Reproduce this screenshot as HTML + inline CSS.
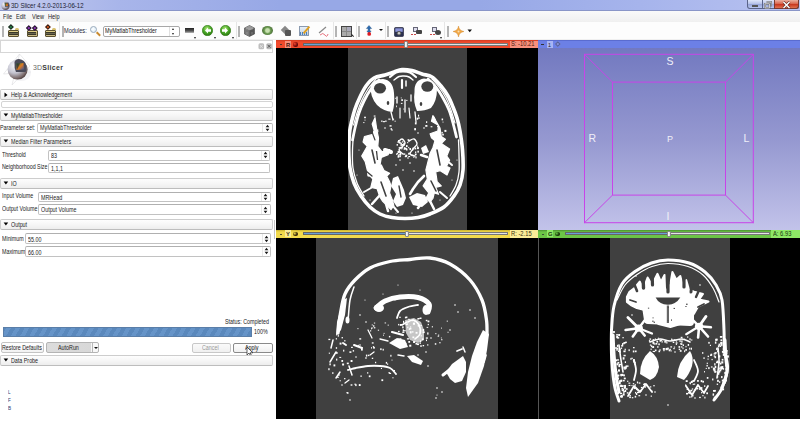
<!DOCTYPE html>
<html><head><meta charset="utf-8">
<style>
*{margin:0;padding:0;box-sizing:border-box}
html,body{width:800px;height:430px;overflow:hidden;background:#fff;font-family:"Liberation Sans",sans-serif;color:#1a1a1a}
.a{position:absolute}
.t{position:absolute;font-size:6.5px;line-height:8px;white-space:nowrap;transform-origin:0 50%;transform:scaleX(.86)}
.box{position:absolute;border:1px solid #cdcdcd;border-bottom-color:#bdbdbd;border-radius:2px;background:linear-gradient(#fdfdfd,#f6f6f6 50%,#ededed)}
.fld{position:absolute;border:1px solid #c2c2c2;border-top-color:#b0b0b0;border-radius:2px;background:#fff}
.spin{position:absolute;right:0;top:0;bottom:0;width:8px;border-left:1px solid #e8e8e8}
.tri-d{position:absolute;width:0;height:0;border-left:2.5px solid transparent;border-right:2.5px solid transparent;border-top:3px solid #111}
.tri-r{position:absolute;width:0;height:0;border-top:2.5px solid transparent;border-bottom:2.5px solid transparent;border-left:3px solid #111}
.grip{position:absolute;width:2px;height:11px;background:#b4b4b4;top:26px}
.sep{position:absolute;width:1px;height:17px;background:#e6e6e6;top:22px}
.dd{position:absolute;width:0;height:0;border-left:1.5px solid transparent;border-right:1.5px solid transparent;border-top:2px solid #222}
</style></head><body>
<!-- title bar -->
<div class="a" style="left:0;top:0;width:800px;height:10px;background:linear-gradient(90deg,#c4cbee 0%,#a8b5ea 15%,#97a8e6 35%,#97a8e6 60%,#a6b4ec 80%,#b8c2f0 100%)"></div>
<div class="a" style="left:0;top:10px;width:800px;height:1px;background:#8a96c8"></div>
<svg class="a" style="left:0.5px;top:0.5px" width="9" height="9"><defs><radialGradient id="tsph" cx="35%" cy="30%" r="75%"><stop offset="0" stop-color="#f8f8fc"/><stop offset=".55" stop-color="#b8b8c8"/><stop offset="1" stop-color="#4a3a3a"/></radialGradient></defs><circle cx="4.5" cy="4.7" r="4.2" fill="url(#tsph)"/><path d="M3.5,1.5 L7.5,1.8 L8,5.5 L4,5.8Z" fill="#3a3a48"/><path d="M4.3,2.4 L6.8,2.5 L7,5 L4.5,5.1Z" fill="#d07020"/><path d="M4.3,2.4 L5.5,2.4 L4.5,5.1Z" fill="#208040"/></svg>
<div class="t" style="left:10.5px;top:1.8px;font-size:7.2px;color:#202030;transform:scaleX(.84)">3D Slicer 4.2.0-2013-06-12</div>
<div class="a" style="left:747px;top:0;width:52px;height:9px;border:1px solid #5a6488;border-top:0;border-radius:0 0 3px 3px;background:linear-gradient(#dfe6fa,#b4c0e8 50%,#98a6d8 55%,#b8c6f0)"></div>
<div class="a" style="left:774px;top:0;width:25px;height:9px;border:1px solid #7a3a30;border-top:0;border-radius:0 0 3px 0;background:linear-gradient(#eab0a0,#d86048 50%,#c83820 55%,#e07050)"></div>
<div class="a" style="left:761.5px;top:0;width:1px;height:8.5px;background:#5a6488"></div>
<div class="a" style="left:751.5px;top:4.5px;width:6px;height:2.2px;background:#fff;border:0.6px solid #555"></div>
<svg class="a" style="left:764px;top:0.5px" width="8" height="8"><path d="M2.5,1 L7,1 L7,5.5" fill="none" stroke="#555" stroke-width="1.6"/><path d="M2.5,1 L7,1 L7,5.5" fill="none" stroke="#fff" stroke-width=".6"/><rect x="1" y="2.8" width="4.5" height="4.2" fill="none" stroke="#555" stroke-width="1.6"/><rect x="1" y="2.8" width="4.5" height="4.2" fill="none" stroke="#fff" stroke-width=".7"/></svg>
<svg class="a" style="left:782px;top:0.5px" width="9" height="8"><path d="M1.5,1 L7.5,7 M7.5,1 L1.5,7" stroke="#5a2a20" stroke-width="2.6"/><path d="M1.5,1 L7.5,7 M7.5,1 L1.5,7" stroke="#fff" stroke-width="1.5"/></svg>
<!-- menu bar -->
<div class="a" style="left:0;top:11px;width:800px;height:10.5px;background:linear-gradient(#fafafa,#f0f0f0)"></div>
<div class="a" style="left:0;top:21.5px;width:800px;height:0.5px;background:#e0e0e0"></div>
<div class="t" style="left:3px;top:13px">File</div>
<div class="t" style="left:16px;top:13px">Edit</div>
<div class="t" style="left:32px;top:13px">View</div>
<div class="t" style="left:48px;top:13px">Help</div>
<!-- toolbar -->
<div class="a" style="left:0;top:22px;width:800px;height:18px;background:#fdfdfd"></div>
<div class="a" style="left:0;top:39px;width:800px;height:1px;background:#f0f0f0"></div>
<div class="grip" style="left:2px"></div>
<div class="sep" style="left:59px"></div>
<div class="grip" style="left:62px"></div>
<div class="t" style="left:64px;top:27px;color:#223">Modules:</div>
<div class="sep" style="left:235.5px"></div>
<div class="grip" style="left:238px"></div>
<div class="sep" style="left:333px"></div>
<div class="grip" style="left:335px"></div>
<div class="sep" style="left:355.5px"></div>
<div class="grip" style="left:357.5px"></div>
<div class="sep" style="left:384.5px"></div>
<div class="grip" style="left:386.5px"></div>
<div class="sep" style="left:444px"></div>
<div class="grip" style="left:447px"></div>
<div class="a" style="left:8px;top:29.8px;width:11px;height:7px;border:0.8px solid #5a5030;border-radius:1px;background:linear-gradient(#e8d890,#c8b470 30%,#b0a070 70%,#d8c890)"></div><div class="a" style="left:14.5px;top:28.3px;width:4px;height:2px;border-radius:1.5px 1.5px 0 0;background:#d8c070"></div><div class="a" style="left:9.2px;top:31.6px;width:8.6px;height:3px;background:#6a6650;border-top:0.6px solid #3a3828;border-bottom:0.6px solid #3a3828"></div><div class="a" style="left:9.2px;top:25.4px;width:3.8px;height:3.8px;background:#208040;border:0.5px solid #222;transform:rotate(45deg)"></div>
<div class="a" style="left:26.5px;top:29.8px;width:11px;height:7px;border:0.8px solid #5a5030;border-radius:1px;background:linear-gradient(#e8d890,#c8b470 30%,#b0a070 70%,#d8c890)"></div><div class="a" style="left:33.0px;top:28.3px;width:4px;height:2px;border-radius:1.5px 1.5px 0 0;background:#d8c070"></div><div class="a" style="left:27.7px;top:31.6px;width:8.6px;height:3px;background:#6a6650;border-top:0.6px solid #3a3828;border-bottom:0.6px solid #3a3828"></div><div class="a" style="left:27.3px;top:25.6px;width:3.6px;height:3.6px;background:#9030c0;border:0.5px solid #222;transform:rotate(45deg)"></div><div class="a" style="left:32.7px;top:25.6px;width:3.6px;height:3.6px;background:#9030c0;border:0.5px solid #222;transform:rotate(45deg)"></div>
<div class="a" style="left:45px;top:29.8px;width:11px;height:7px;border:0.8px solid #5a5030;border-radius:1px;background:linear-gradient(#e8d890,#c8b470 30%,#b0a070 70%,#d8c890)"></div><div class="a" style="left:51.5px;top:28.3px;width:4px;height:2px;border-radius:1.5px 1.5px 0 0;background:#d8c070"></div><div class="a" style="left:46.2px;top:31.6px;width:8.6px;height:3px;background:#6a6650;border-top:0.6px solid #3a3828;border-bottom:0.6px solid #3a3828"></div><div class="a" style="left:46.2px;top:25.4px;width:3.8px;height:3.8px;background:#e05010;border:0.5px solid #222;transform:rotate(45deg)"></div>
<div class="a" style="left:90px;top:25.5px;width:7px;height:7px;border-radius:50%;border:1.2px solid #9ab;background:radial-gradient(circle at 40% 40%,#fff,#cfe4f4)"></div><div class="a" style="left:95.5px;top:33px;width:5px;height:1.8px;background:#c88a30;transform:rotate(45deg)"></div>
<div class="fld" style="left:103px;top:25.5px;width:77px;height:11px;border-color:#a8a8a8"></div><div class="t" style="left:105px;top:27px;font-size:6.3px;color:#111;transform:scaleX(0.85);">MyMatlabThresholder</div>
<div class="a" style="left:169px;top:26.5px;width:1px;height:9px;background:#e0e0e0"></div><div class="a" style="left:171.5px;top:28px;border:1.5px solid transparent;border-bottom:2px solid #222;border-top:0;width:0;height:0"></div><div class="a" style="left:171.5px;top:32.5px;border:1.5px solid transparent;border-top:2px solid #222;border-bottom:0;width:0;height:0"></div>
<div class="a" style="left:185px;top:27.5px;width:9px;height:5.5px;background:linear-gradient(#222,#555 60%,#bbb)"></div><div class="dd" style="left:194px;top:36.5px"></div>
<svg class="a" style="left:201.8px;top:24.8px" width="11" height="11"><defs><radialGradient id="gg207" cx="45%" cy="35%" r="65%"><stop offset="0" stop-color="#b8ec80"/><stop offset=".55" stop-color="#4aa828"/><stop offset="1" stop-color="#2a7a10"/></radialGradient></defs><circle cx="5.5" cy="5.5" r="5.2" fill="url(#gg207)" stroke="#357a1a" stroke-width=".6"/><path d="M3,5.5 L6,2.5 L6,4.3 L9,4.3 L9,6.7 L6,6.7 L6,8.5Z" fill="#fff"/></svg><div class="dd" style="left:213.5px;top:36.5px"></div>
<svg class="a" style="left:220.2px;top:24.8px" width="11" height="11"><defs><radialGradient id="gg225" cx="45%" cy="35%" r="65%"><stop offset="0" stop-color="#b8ec80"/><stop offset=".55" stop-color="#4aa828"/><stop offset="1" stop-color="#2a7a10"/></radialGradient></defs><circle cx="5.5" cy="5.5" r="5.2" fill="url(#gg225)" stroke="#357a1a" stroke-width=".6"/><path d="M8,5.5 L5,2.5 L5,4.3 L2,4.3 L2,6.7 L5,6.7 L5,8.5Z" fill="#fff"/></svg><div class="dd" style="left:232px;top:36.5px"></div>
<svg class="a" style="left:243.5px;top:24.5px" width="11" height="12"><path d="M5.5,0.5 L10.5,3 L10.5,9 L5.5,11.5 L0.5,9 L0.5,3Z" fill="#555" stroke="#333" stroke-width=".5"/><path d="M0.5,3 L5.5,5.5 L10.5,3 L5.5,0.5Z" fill="#999"/><path d="M5.5,5.5 L5.5,11.5 L0.5,9 L0.5,3Z" fill="#777"/><path d="M2,4 L9,4 M3,7 L3,9.5 M8,7 L8,9.5" stroke="#bbb" stroke-width=".4"/></svg>
<div class="a" style="left:261.5px;top:26px;width:11px;height:9px;border-radius:50%;background:radial-gradient(circle,#c8e0b0 0 25%,#6a9a50 45%,#405a30 90%)"></div>
<div class="a" style="left:282px;top:27px;width:6px;height:6px;background:#888;transform:rotate(45deg)"></div><div class="a" style="left:285px;top:29.5px;width:6px;height:6px;background:#555;border-radius:1px"></div>
<div class="a" style="left:299px;top:26px;width:10px;height:10px;border:1px solid #8a9ab0;background:linear-gradient(#e8f0f8,#c0d0e0)"></div><div class="a" style="left:300px;top:32px;width:8px;height:3px;background:repeating-linear-gradient(90deg,#4a80c0 0 1px,transparent 1px 2px)"></div><div class="a" style="left:302px;top:29px;width:9px;height:2px;background:#e0a020;transform:rotate(-50deg)"></div>
<svg class="a" style="left:317px;top:25px" width="12" height="12"><path d="M2 8 L9 2" stroke="#888" stroke-width="1.2"/><path d="M3 10 Q6 7 8 10 T11 9" stroke="#e05060" stroke-width=".8" fill="none"/></svg>
<div class="a" style="left:341px;top:26px;width:11px;height:10.5px;border:1px solid #444;background:#888"></div><div class="a" style="left:342px;top:27px;width:4px;height:4px;background:#aaa"></div><div class="a" style="left:347px;top:27px;width:4px;height:4px;background:#aab"></div><div class="a" style="left:342px;top:32px;width:4px;height:3.5px;background:#aaa"></div><div class="a" style="left:347px;top:32px;width:4px;height:3.5px;background:#aaa"></div><div class="a" style="left:351px;top:35px;width:3px;height:1.2px;background:#222;transform:rotate(45deg)"></div>
<svg class="a" style="left:365px;top:25px" width="8" height="12"><path d="M4,0.5 L6.6,3.5 L4.9,3.5 L4.9,6 L6.2,6 L4,8.3 L1.8,6 L3.1,6 L3.1,3.5 L1.4,3.5Z" fill="#2a6ab0" stroke="#1a4a80" stroke-width=".4"/><circle cx="4.2" cy="8.9" r="1.9" fill="#e01a20"/></svg><div class="a" style="left:378.5px;top:29px;border:2px solid transparent;border-top:2.5px solid #111;border-bottom:0;width:0;height:0"></div>
<svg class="a" style="left:393.5px;top:26.5px" width="10" height="10"><rect x="0.5" y="0.5" width="9" height="9" rx="1" fill="#2a3050" stroke="#1a1a30" stroke-width=".6"/><rect x="1.3" y="1.3" width="7.4" height="3.5" fill="#8c94d8"/><circle cx="5" cy="6.3" r="2.3" fill="#555"/><circle cx="5" cy="6.3" r="1.2" fill="#ccc"/></svg>
<div class="a" style="left:413px;top:26.5px;width:5px;height:5px;border:1px solid #667;background:#dde"></div><div class="a" style="left:416px;top:30px;width:6px;height:4px;border-radius:1px;background:#444"></div><div class="a" style="left:411px;top:33.5px;width:1.6px;height:1.6px;border-radius:50%;background:#c03030"></div><div class="a" style="left:414px;top:33.5px;width:1.6px;height:1.6px;border-radius:50%;background:#c03030"></div>
<div class="a" style="left:432px;top:26.5px;width:5px;height:5px;border:1px solid #667;background:#dde"></div><div class="a" style="left:435px;top:30px;width:6px;height:5px;border-radius:50%;background:#444"></div><div class="a" style="left:430px;top:33.5px;width:1.6px;height:1.6px;border-radius:50%;background:#c03030"></div><div class="a" style="left:433px;top:33.5px;width:1.6px;height:1.6px;border-radius:50%;background:#c03030"></div><div class="dd" style="left:440px;top:36.5px"></div>
<svg class="a" style="left:453px;top:26px" width="11" height="11"><path d="M5.5 0 Q6 4.6 11 5.5 Q6 6.4 5.5 11 Q5 6.4 0 5.5 Q5 4.6 5.5 0Z" fill="#f0a848" stroke="#d08020" stroke-width=".4"/><circle cx="5.5" cy="5.5" r="1" fill="#fce0b0"/></svg><svg class="a" style="left:467px;top:29px" width="6" height="4"><path d="M0.5,0.5 L5,0.5 L2.75,3.3Z" fill="#111"/></svg>


<!-- left panel -->
<div class="a" style="left:0;top:40px;width:276px;height:379px;background:#fff"></div>
<div class="a" style="left:0;top:40px;width:272.8px;height:12.8px;border:1.2px solid #d6d6d6;background:#fff"></div><svg class="a" style="left:257.5px;top:43px" width="15" height="7"><rect x="0.5" y="0.3" width="5.6" height="6" rx="1.5" fill="#bdbdbd"/><rect x="8.3" y="0.3" width="5.6" height="6" rx="1.5" fill="#bdbdbd"/><path d="M1.8,2 L4.8,4.8 M4.8,2 L1.8,4.8" stroke="#eee" stroke-width=".7"/><path d="M9.6,1.8 L12.6,4.8 M12.6,1.8 L9.6,4.8" stroke="#444" stroke-width=".8"/></svg>
<svg class="a" style="left:0;top:52px" width="34" height="36"><g transform="translate(0,-52)">
<path d="M3.5,74 L19.5,54 L30,66 M3.5,74 L31,72 M12,85 L19.5,54 M12,85 L30,66" fill="none" stroke="#d4d4d8" stroke-width=".5"/>
<defs><radialGradient id="sph" cx="35%" cy="30%" r="75%"><stop offset="0" stop-color="#f8f8fc"/><stop offset=".5" stop-color="#c4c4d0"/><stop offset=".85" stop-color="#7a6a6a"/><stop offset="1" stop-color="#4a3a3a"/></radialGradient>
<linearGradient id="cg1" x1="0" y1="0" x2="1" y2="1"><stop offset="0" stop-color="#208040"/><stop offset=".5" stop-color="#e07a20"/><stop offset="1" stop-color="#3050a0"/></linearGradient></defs>
<ellipse cx="21" cy="73" rx="10" ry="8" fill="#e8e8ec" opacity=".5"/>
<circle cx="17.6" cy="69.6" r="10" fill="url(#sph)"/>
<path d="M14.5,62 Q15.5,59 19,59 Q25,59.5 26.5,66 Q27,70 25.5,72 L16,72 Q14,68 14.5,62Z" fill="#4a4a58"/>
<path d="M16.5,63.5 L23.5,63 L24,69.5 L16.5,70Z" fill="url(#cg1)"/>
<path d="M16.5,63.5 L20,63.2 L17,70Z" fill="#1a1a30" opacity=".6"/>
</g></svg><div class="t" style="left:32.5px;top:63.3px;font-size:7.6px;color:#6a6a6a;transform:scaleX(0.92);letter-spacing:.2px;line-height:10px">3D<b style="font-weight:bold;color:#3a3a3a;letter-spacing:.35px">Slicer</b></div>
<div class="box" style="left:0;top:89px;width:272.8px;height:11px"></div><svg class="a" style="left:3.5px;top:91.5px" width="4" height="6"><path d="M0.5,0.5 L3.5,2.9 L0.5,5.3Z" fill="#000"/></svg><div class="t" style="left:11px;top:90.5px;font-size:6.3px;color:#1a1a1a;transform:scaleX(0.85);">Help &amp; Acknowledgement</div>

<div class="box" style="left:0.5px;top:100.5px;width:272px;height:7.5px;background:#fff;border-color:#d4d4d4"></div>
<div class="box" style="left:0;top:110px;width:272.8px;height:10.5px"></div><svg class="a" style="left:2.5px;top:113px" width="6" height="4"><path d="M0.6,0.4 L5.2,0.4 L2.9,3.6Z" fill="#000"/></svg><div class="t" style="left:11px;top:111.5px;font-size:6.3px;color:#1a1a1a;transform:scaleX(0.85);">MyMatlabThresholder</div>

<div class="t" style="left:0px;top:124px;font-size:6.3px;color:#1a1a1a;transform:scaleX(0.85);">Parameter set:</div>
<div class="fld" style="left:37px;top:122.5px;width:235.5px;height:10px"><div class="spin" style="width:10px"><svg style="position:absolute;left:50%;top:50%;margin-left:-2.5px;margin-top:-4px" width="5" height="8"><path d="M0.6,3.3 L2.5,0.8 L4.4,3.3Z M0.6,4.7 L2.5,7.2 L4.4,4.7Z" fill="#1a1a1a"/></svg></div></div><div class="t" style="left:39.5px;top:124px;font-size:6.3px;color:#1a1a1a;transform:scaleX(0.85);">MyMatlabThresholder</div>

<div class="box" style="left:0;top:136px;width:272.8px;height:10.5px"></div><svg class="a" style="left:2.5px;top:139px" width="6" height="4"><path d="M0.6,0.4 L5.2,0.4 L2.9,3.6Z" fill="#000"/></svg><div class="t" style="left:11px;top:137.5px;font-size:6.3px;color:#1a1a1a;transform:scaleX(0.85);">Median Filter Parameters</div>

<div class="t" style="left:2px;top:150.5px;font-size:6.3px;color:#1a1a1a;transform:scaleX(0.85);">Threshold</div>
<div class="fld" style="left:48px;top:149.5px;width:222.3px;height:11px"><div class="spin"><svg style="position:absolute;left:50%;top:50%;margin-left:-2.5px;margin-top:-4px" width="5" height="8"><path d="M0.6,3.3 L2.5,0.8 L4.4,3.3Z M0.6,4.7 L2.5,7.2 L4.4,4.7Z" fill="#1a1a1a"/></svg></div></div><div class="t" style="left:51px;top:152px;font-size:6.3px;color:#1a1a1a;transform:scaleX(0.85);">83</div>
<div class="t" style="left:1.5px;top:163px;font-size:6.3px;color:#1a1a1a;transform:scaleX(0.85);">Neighborhood Size</div>
<div class="fld" style="left:48px;top:162.5px;width:222.3px;height:10px"></div><div class="t" style="left:51px;top:165px;font-size:6.3px;color:#1a1a1a;transform:scaleX(0.85);">1,1,1</div>

<div class="box" style="left:0;top:178px;width:272.8px;height:10.5px"></div><svg class="a" style="left:2.5px;top:181px" width="6" height="4"><path d="M0.6,0.4 L5.2,0.4 L2.9,3.6Z" fill="#000"/></svg><div class="t" style="left:11px;top:179.5px;font-size:6.3px;color:#1a1a1a;transform:scaleX(0.85);">IO</div>

<div class="t" style="left:2px;top:192px;font-size:6.3px;color:#1a1a1a;transform:scaleX(0.85);">Input Volume</div>
<div class="fld" style="left:38px;top:191.5px;width:232.5px;height:10.6px"><div class="spin" style="width:9px"><svg style="position:absolute;left:50%;top:50%;margin-left:-2.5px;margin-top:-4px" width="5" height="8"><path d="M0.6,3.3 L2.5,0.8 L4.4,3.3Z M0.6,4.7 L2.5,7.2 L4.4,4.7Z" fill="#1a1a1a"/></svg></div></div><div class="t" style="left:40.5px;top:193.5px;font-size:6.3px;color:#1a1a1a;transform:scaleX(0.85);">MRHead</div>
<div class="t" style="left:1.5px;top:204.5px;font-size:6.3px;color:#1a1a1a;transform:scaleX(0.85);">Output Volume</div>
<div class="fld" style="left:38px;top:204.3px;width:232.5px;height:10.5px"><div class="spin" style="width:9px"><svg style="position:absolute;left:50%;top:50%;margin-left:-2.5px;margin-top:-4px" width="5" height="8"><path d="M0.6,3.3 L2.5,0.8 L4.4,3.3Z M0.6,4.7 L2.5,7.2 L4.4,4.7Z" fill="#1a1a1a"/></svg></div></div><div class="t" style="left:40.5px;top:206px;font-size:6.3px;color:#1a1a1a;transform:scaleX(0.85);">Output Volume</div>

<div class="box" style="left:0;top:219px;width:272.8px;height:11px"></div><svg class="a" style="left:2.5px;top:222px" width="6" height="4"><path d="M0.6,0.4 L5.2,0.4 L2.9,3.6Z" fill="#000"/></svg><div class="t" style="left:11px;top:220.5px;font-size:6.3px;color:#1a1a1a;transform:scaleX(0.85);">Output</div>

<div class="a" style="left:273.6px;top:220px;width:1.4px;height:18.5px;background:#c4c4c4"></div><div class="t" style="left:1.5px;top:235px;font-size:6.3px;color:#1a1a1a;transform:scaleX(0.85);">Minimum</div>
<div class="fld" style="left:25px;top:233px;width:245.5px;height:11px"><div class="spin"><svg style="position:absolute;left:50%;top:50%;margin-left:-2.5px;margin-top:-4px" width="5" height="8"><path d="M0.6,3.3 L2.5,0.8 L4.4,3.3Z M0.6,4.7 L2.5,7.2 L4.4,4.7Z" fill="#1a1a1a"/></svg></div></div><div class="t" style="left:28px;top:236px;font-size:6.3px;color:#1a1a1a;transform:scaleX(0.85);">55.00</div>
<div class="t" style="left:1.5px;top:247.5px;font-size:6.3px;color:#1a1a1a;transform:scaleX(0.85);">Maximum</div>
<div class="fld" style="left:25px;top:246px;width:245.5px;height:10.6px"><div class="spin"><svg style="position:absolute;left:50%;top:50%;margin-left:-2.5px;margin-top:-4px" width="5" height="8"><path d="M0.6,3.3 L2.5,0.8 L4.4,3.3Z M0.6,4.7 L2.5,7.2 L4.4,4.7Z" fill="#1a1a1a"/></svg></div></div><div class="t" style="left:28px;top:248.5px;font-size:6.3px;color:#1a1a1a;transform:scaleX(0.85);">66.00</div>

<div class="t" style="left:225px;top:318px;font-size:6.3px;color:#1a1a1a;transform:scaleX(0.85);">Status: Completed</div>
<div class="a" style="left:3px;top:327px;width:249px;height:9.5px;border:1px solid #5a7ea8;background:repeating-linear-gradient(-60deg,#5a88bc 0 4px,#6694c8 4px 8px)"></div><div class="t" style="left:254px;top:328px;font-size:6.3px;color:#1a1a1a;transform:scaleX(0.85);">100%</div>

<div class="a" style="left:0.5px;top:342px;width:43px;height:10.5px;border:1px solid #c4c4c4;border-radius:2px;background:linear-gradient(#fefefe,#f2f2f2)"></div><div class="t" style="left:1.5px;top:343.5px;font-size:6.3px;color:#1a1a1a;transform:scaleX(0.85);">Restore Defaults</div>
<div class="a" style="left:45.5px;top:342px;width:53px;height:10.5px;border:1px solid #b4b4b4;border-radius:2px;background:linear-gradient(90deg,#dcdcdc 0,#d8d8d8 86%,#f8f8f8 86%)"></div><div class="a" style="left:91.5px;top:343px;width:0.8px;height:9px;background:#b8b8b8"></div><div class="tri-d" style="left:93.5px;top:346.5px;border-left-width:2px;border-right-width:2px;border-top-width:2.5px"></div><div class="t" style="left:58px;top:343.5px;font-size:6.3px;color:#1a1a1a;transform:scaleX(0.85);">AutoRun</div>
<div class="a" style="left:191.5px;top:342.5px;width:39.5px;height:10px;border:1px solid #c8c8c8;border-radius:2px;background:linear-gradient(#fafafa,#f0f0f0)"></div><div class="t" style="left:202px;top:343.5px;font-size:6.3px;color:#999;transform:scaleX(0.85);">Cancel</div>
<div class="a" style="left:233px;top:342.5px;width:39.5px;height:10px;border:1px solid #8a8a8a;border-radius:2px;background:linear-gradient(#fefefe,#f0f0f0)"></div><div class="t" style="left:245px;top:343.5px;font-size:6.3px;color:#111;transform:scaleX(0.85);">Apply</div>
<svg class="a" style="left:246px;top:346px" width="8" height="12"><path d="M1 1 L1 9 L3 7 L4.5 10 L5.5 9.5 L4.2 6.8 L6.8 6.8 Z" fill="#fff" stroke="#222" stroke-width=".7"/></svg>
<div class="box" style="left:0;top:355px;width:272.8px;height:10.5px"></div><svg class="a" style="left:2.5px;top:358px" width="6" height="4"><path d="M0.6,0.4 L5.2,0.4 L2.9,3.6Z" fill="#000"/></svg><div class="t" style="left:11px;top:356.5px;font-size:6.3px;color:#1a1a1a;transform:scaleX(0.85);">Data Probe</div>

<div class="t" style="left:7.8px;top:387.8px;font-size:5.4px;color:#2a3a70;transform:scaleX(0.85);">L</div>
<div class="t" style="left:7.8px;top:395.8px;font-size:5.4px;color:#2a3a70;transform:scaleX(0.85);">F</div>
<div class="t" style="left:7.8px;top:403.8px;font-size:5.4px;color:#2a3a70;transform:scaleX(0.85);">B</div>


<!-- views -->
<div class="a" style="left:276px;top:40px;width:524px;height:379px;background:#000"></div>
<div class="a" style="left:276px;top:48px;width:262px;height:181.5px;background:#000"></div>
<div class="a" style="left:348px;top:48px;width:119px;height:181.5px;background:#404040"></div>
<div class="a" style="left:276px;top:40px;width:262px;height:8px;background:linear-gradient(#d03a20,#f04a2c 25%,#f04a2c)"></div>
<div class="a" style="left:279.5px;top:44px;width:2.5px;height:1px;background:#333;opacity:.8"></div>
<div class="a" style="left:284.8px;top:40.75px;width:5.9px;height:6.9px;background:#f7907c"></div><div class="t" style="left:285.7px;top:40.8px;font-size:6.2px;line-height:7px;transform:scaleX(.95);color:#4a1a10;font-weight:bold">R</div><div class="a" style="left:293px;top:42px;width:4.5px;height:4.5px;border-radius:50%;background:radial-gradient(circle at 35% 35%,#f04a2c 0,#901010 45%,#180808 90%)"></div>
<div class="a" style="left:303px;top:42.8px;width:205px;height:2.8px;background:#e4e4e4;border:0.6px solid #777"></div>
<div class="a" style="left:303px;top:42.8px;width:101.39999999999998px;height:2.8px;background:#6aa0d8;border:0.6px solid #666;border-right:0"></div>
<div class="a" style="left:404.4px;top:41px;width:4px;height:6.5px;border:0.6px solid #888;border-radius:1px;background:linear-gradient(90deg,#fff,#ddd)"></div>
<div class="a" style="left:509.7px;top:40.5px;width:28.30000000000001px;height:7.5px;background:#f7907c"></div>
<div class="t" style="left:511.2px;top:40.4px;font-size:6.6px;line-height:7.5px;color:#4a1a10;transform:scaleX(.88)">S: -10.21</div>
<div class="a" style="left:538px;top:48px;width:262px;height:181.5px;background:linear-gradient(#7279c0,#9598d0 50%,#c2c3ea)"></div>
<div class="a" style="left:538px;top:40px;width:262px;height:8px;background:#6c80e6;border-top:1px solid #5a6cd0"></div>
<div class="a" style="left:541px;top:44px;width:3px;height:1px;background:#333"></div>
<div class="a" style="left:547px;top:40.6px;width:5.8px;height:7.2px;background:#a8b4f4"></div><div class="t" style="left:548.3px;top:41px;font-size:6.2px;line-height:7px;color:#222">1</div><div class="a" style="left:555.5px;top:42px;width:3.6px;height:3.6px;border:0.8px solid #56609a;background:#8a94d8;transform:rotate(45deg)"></div>
<svg class="a" style="left:538px;top:48px" width="262" height="182">
<g stroke="#c844e8" stroke-width="1" fill="none" transform="translate(-538,-48)">
<rect x="584.5" y="54.3" width="168.8" height="168.4"/>
<rect x="612.5" y="82.1" width="113" height="113"/>
<path d="M584.5 54.3 L612.5 82.1 M753.3 54.3 L725.5 82.1 M584.5 222.7 L612.5 195.1 M753.3 222.7 L725.5 195.1"/>
</g>
<g fill="#f0f0f8" font-family="Liberation Sans" font-size="10.5" transform="translate(-538,-48)">
<text x="666.5" y="64.8">S</text>
<text x="588.5" y="142.3">R</text>
<text x="743.5" y="142.3">L</text>
<text x="667" y="141.7" font-size="9">P</text>
<text x="666.5" y="220">I</text>
</g></svg>
<div class="a" style="left:276px;top:238px;width:262px;height:180.5px;background:#000"></div>
<div class="a" style="left:316px;top:238px;width:181.5px;height:180.5px;background:#404040"></div>
<div class="a" style="left:276px;top:229.5px;width:262px;height:8px;background:linear-gradient(#c8b030,#f2da4c 25%,#f2da4c)"></div>
<div class="a" style="left:279.5px;top:233.5px;width:2.5px;height:1px;background:#333;opacity:.8"></div>
<div class="a" style="left:284.8px;top:230.25px;width:5.9px;height:6.9px;background:#faec98"></div><div class="t" style="left:285.7px;top:230.3px;font-size:6.2px;line-height:7px;transform:scaleX(.95);color:#3a3010;font-weight:bold">Y</div><div class="a" style="left:293px;top:231.5px;width:4.5px;height:4.5px;border-radius:50%;background:radial-gradient(circle at 35% 35%,#f2da4c 0,#504010 45%,#180808 90%)"></div>
<div class="a" style="left:303px;top:232.3px;width:205px;height:2.8px;background:#e4e4e4;border:0.6px solid #777"></div>
<div class="a" style="left:303px;top:232.3px;width:102px;height:2.8px;background:#6aa0d8;border:0.6px solid #666;border-right:0"></div>
<div class="a" style="left:405px;top:230.5px;width:4px;height:6.5px;border:0.6px solid #888;border-radius:1px;background:linear-gradient(90deg,#fff,#ddd)"></div>
<div class="a" style="left:509.7px;top:230.0px;width:28.30000000000001px;height:7.5px;background:#faec98"></div>
<div class="t" style="left:511.2px;top:229.9px;font-size:6.6px;line-height:7.5px;color:#3a3010;transform:scaleX(.88)">R: -2.15</div>
<div class="a" style="left:538px;top:238px;width:262px;height:180.5px;background:#000"></div>
<div class="a" style="left:609.5px;top:238px;width:120px;height:180.5px;background:#404040"></div>
<div class="a" style="left:538px;top:229.5px;width:262px;height:8px;background:linear-gradient(#4a9030,#6cc446 25%,#6cc446)"></div>
<div class="a" style="left:541.5px;top:233.5px;width:2.5px;height:1px;background:#333;opacity:.8"></div>
<div class="a" style="left:546.8px;top:230.25px;width:5.9px;height:6.9px;background:#8ee866"></div><div class="t" style="left:547.7px;top:230.3px;font-size:6.2px;line-height:7px;transform:scaleX(.95);color:#1a3a10;font-weight:bold">G</div><div class="a" style="left:555px;top:231.5px;width:4.5px;height:4.5px;border-radius:50%;background:radial-gradient(circle at 35% 35%,#6cc446 0,#205010 45%,#180808 90%)"></div>
<div class="a" style="left:565px;top:232.3px;width:205px;height:2.8px;background:#e4e4e4;border:0.6px solid #777"></div>
<div class="a" style="left:565px;top:232.3px;width:102px;height:2.8px;background:#6aa0d8;border:0.6px solid #666;border-right:0"></div>
<div class="a" style="left:667px;top:230.5px;width:4px;height:6.5px;border:0.6px solid #888;border-radius:1px;background:linear-gradient(90deg,#fff,#ddd)"></div>
<div class="a" style="left:771px;top:230.0px;width:29px;height:7.5px;background:#8ee866"></div>
<div class="t" style="left:772.5px;top:229.9px;font-size:6.6px;line-height:7.5px;color:#1a3a10;transform:scaleX(.88)">A: 6.93</div>
<div class="a" style="left:537.5px;top:238px;width:1px;height:180.5px;background:#555"></div>
<svg class="a" style="left:0;top:0" width="800" height="430">
<defs><clipPath id="cr"><rect x="348" y="48" width="119" height="181.5"/></clipPath><clipPath id="cy"><rect x="316" y="238" width="181.5" height="180.5"/></clipPath><clipPath id="cg"><rect x="609.5" y="238" width="120" height="180.5"/></clipPath></defs>
<g clip-path="url(#cr)">
<path d="M402,69.5 C405.0,69.2 408.7,69.8 412,70.5 C415.3,71.2 418.7,72.9 422,74 C425.3,75.1 428.8,75.0 432,77 C435.2,79.0 438.3,82.8 441,86 C443.7,89.2 446.0,92.5 448,96 C450.0,99.5 451.5,103.3 453,107 C454.5,110.7 455.8,114.0 457,118 C458.2,122.0 459.1,125.7 460,131 C460.9,136.3 462.0,143.5 462.5,150 C463.0,156.5 463.4,164.2 463,170 C462.6,175.8 461.5,180.7 460,185 C458.5,189.3 456.7,192.3 454,196 C451.3,199.7 448.0,204.0 444,207 C440.0,210.0 434.3,212.2 430,214 C425.7,215.8 422.2,216.8 418,217.5 C413.8,218.2 409.3,218.5 405,218.5 C400.7,218.5 396.2,218.2 392,217.5 C387.8,216.8 383.7,215.8 380,214 C376.3,212.2 373.2,210.0 370,207 C366.8,204.0 363.7,200.0 361,196 C358.3,192.0 355.8,187.7 354,183 C352.2,178.3 350.9,173.5 350,168 C349.1,162.5 348.9,155.8 348.8,150 C348.7,144.2 349.1,137.7 349.5,133 C349.9,128.3 350.6,126.0 351.5,122 C352.4,118.0 353.6,113.2 355,109 C356.4,104.8 358.2,100.8 360,97 C361.8,93.2 363.7,89.2 366,86 C368.3,82.8 370.8,79.8 374,78 C377.2,76.2 381.7,76.0 385,75 C388.3,74.0 391.2,72.9 394,72 C396.8,71.1 399.0,69.8 402,69.5Z" fill="none" stroke="#ffffff" stroke-width="3.6" stroke-linejoin="round" stroke-linecap="round"/>
<path d="M353.5,135 C353.3,137.5 352.6,144.5 352.5,150 C352.4,155.5 352.2,162.5 353,168 C353.8,173.5 355.2,178.3 357,183 C358.8,187.7 362.8,193.8 364,196" fill="none" stroke="#ffffff" stroke-width="1.3" stroke-linejoin="round" stroke-linecap="round"/>
<path d="M458.5,140 C458.6,142.5 458.9,149.7 459,155 C459.1,160.3 459.5,167.0 459,172 C458.5,177.0 457.5,181.0 456,185 C454.5,189.0 451.0,194.2 450,196" fill="none" stroke="#ffffff" stroke-width="1.3" stroke-linejoin="round" stroke-linecap="round"/>
<path d="M379,80 C377.7,81.5 373.5,85.5 371,89 C368.5,92.5 366.0,97.0 364,101 C362.0,105.0 360.4,108.8 359,113 C357.6,117.2 356.6,121.5 355.5,126 C354.4,130.5 353.0,137.7 352.5,140" fill="none" stroke="#ffffff" stroke-width="2.8" stroke-linejoin="round" stroke-linecap="round"/>
<path d="M376,79 C374.7,80.7 370.4,85.3 368,89 C365.6,92.7 363.3,97.0 361.5,101 C359.7,105.0 358.3,109.0 357,113 C355.7,117.0 354.1,123.0 353.5,125" fill="none" stroke="#ffffff" stroke-width="1.2" stroke-linejoin="round" stroke-linecap="round"/>
<path d="M428,79 C429.3,80.3 433.5,83.8 436,87 C438.5,90.2 440.8,94.2 443,98 C445.2,101.8 447.3,105.8 449,110 C450.7,114.2 451.8,118.5 453,123 C454.2,127.5 455.9,134.7 456.5,137" fill="none" stroke="#ffffff" stroke-width="2.8" stroke-linejoin="round" stroke-linecap="round"/>
<path d="M432,79 C433.2,80.3 436.7,83.8 439,87 C441.3,90.2 444.0,94.2 446,98 C448.0,101.8 449.5,105.8 451,110 C452.5,114.2 454.3,120.8 455,123" fill="none" stroke="#ffffff" stroke-width="1.2" stroke-linejoin="round" stroke-linecap="round"/>
<path d="M390,77 C391.0,76.2 393.8,73.4 396,72.5 C398.2,71.6 400.7,71.5 403,71.5 C405.3,71.5 407.8,71.6 410,72.5 C412.2,73.4 415.0,76.2 416,77" fill="none" stroke="#ffffff" stroke-width="2.2" stroke-linejoin="round" stroke-linecap="round"/>
<path d="M394,80 C394.8,79.4 397.3,77.2 399,76.5 C400.7,75.8 402.3,75.9 404,76 C405.7,76.1 407.5,76.3 409,77 C410.5,77.7 412.3,79.5 413,80" fill="none" stroke="#ffffff" stroke-width="1.4" stroke-linejoin="round" stroke-linecap="round"/>
<path d="M370.5,86 Q373,79 383,79 Q393,80 394,93 Q395,105 392.5,112 Q383,111 377,105 Q370,97 370.5,86Z" fill="#fff"/>
<ellipse cx="380" cy="88.3" rx="6" ry="5.3" fill="#404040"/>
<path d="M414.5,92 Q414,80 424,78.5 Q435,79 437,89 Q437,101 431,108 Q425,111 417,111 Q413,102 414.5,92Z" fill="#fff"/>
<ellipse cx="427.3" cy="86.5" rx="6" ry="5.2" fill="#404040"/>
<ellipse cx="388" cy="103" rx="1.3" ry="2" fill="#404040"/><ellipse cx="421" cy="104" rx="1.3" ry="2" fill="#404040"/>
<rect x="373.7" y="115.5" width="1.8" height="1.1" fill="#fff"/><rect x="381.3" y="120.4" width="1.1" height="1.6" fill="#fff"/><rect x="363.3" y="122.0" width="1.1" height="1.1" fill="#fff"/><rect x="377.3" y="131.0" width="1.1" height="1.3" fill="#fff"/><rect x="382.8" y="121.1" width="2.2" height="1.1" fill="#fff"/><rect x="392.9" y="118.7" width="1.2" height="1.1" fill="#fff"/><rect x="373.1" y="130.8" width="1.2" height="1.7" fill="#fff"/><rect x="385.0" y="120.6" width="1.7" height="1.1" fill="#fff"/><rect x="364.1" y="116.7" width="1.8" height="1.5" fill="#fff"/><rect x="373.3" y="125.5" width="1.5" height="1.4" fill="#fff"/><rect x="390.6" y="128.1" width="1.3" height="1.7" fill="#fff"/><rect x="388.3" y="118.6" width="2.2" height="1.1" fill="#fff"/><rect x="377.1" y="129.4" width="1.2" height="1.6" fill="#fff"/><rect x="389.5" y="125.2" width="2.1" height="1.4" fill="#fff"/>
<rect x="437.0" y="125.7" width="1.7" height="1.5" fill="#fff"/><rect x="442.2" y="133.7" width="1.6" height="1.8" fill="#fff"/><rect x="414.2" y="128.1" width="1.8" height="2.2" fill="#fff"/><rect x="441.6" y="118.5" width="1.5" height="1.8" fill="#fff"/><rect x="418.0" y="114.7" width="1.1" height="1.9" fill="#fff"/><rect x="416.7" y="117.7" width="1.5" height="2.0" fill="#fff"/><rect x="414.9" y="122.3" width="1.7" height="2.1" fill="#fff"/><rect x="441.5" y="131.9" width="1.3" height="1.5" fill="#fff"/><rect x="418.3" y="117.3" width="1.3" height="1.6" fill="#fff"/><rect x="433.2" y="118.0" width="1.0" height="1.5" fill="#fff"/><rect x="425.3" y="125.0" width="2.1" height="1.8" fill="#fff"/><rect x="430.6" y="126.2" width="1.8" height="1.1" fill="#fff"/><rect x="444.4" y="129.9" width="2.0" height="2.0" fill="#fff"/><rect x="426.1" y="121.2" width="1.1" height="1.8" fill="#fff"/>
<path d="M397,97 L397,103" fill="none" stroke="#ffffff" stroke-width="1.4" stroke-linejoin="round" stroke-linecap="round"/>
<path d="M405,100 L405,112" fill="none" stroke="#ffffff" stroke-width="1.3" stroke-linejoin="round" stroke-linecap="round"/>
<path d="M411,95 L411,101" fill="none" stroke="#ffffff" stroke-width="1.3" stroke-linejoin="round" stroke-linecap="round"/>
<path d="M400,108 L400,118" fill="none" stroke="#ffffff" stroke-width="1.2" stroke-linejoin="round" stroke-linecap="round"/>
<path d="M409,108 L410,118" fill="none" stroke="#ffffff" stroke-width="1.2" stroke-linejoin="round" stroke-linecap="round"/>
<path d="M391,112 L393,120" fill="none" stroke="#ffffff" stroke-width="1.3" stroke-linejoin="round" stroke-linecap="round"/>
<path d="M415,112 L416,122" fill="none" stroke="#ffffff" stroke-width="1.3" stroke-linejoin="round" stroke-linecap="round"/>
<path d="M402,80 L402,88" fill="none" stroke="#ffffff" stroke-width="2.2" stroke-linejoin="round" stroke-linecap="round"/>
<path d="M406,81 L406,86" fill="none" stroke="#ffffff" stroke-width="1.5" stroke-linejoin="round" stroke-linecap="round"/>
<rect x="395.2" y="97.8" width="1.0" height="1.0" fill="#fff"/><rect x="400.8" y="97.4" width="0.8" height="1.0" fill="#fff"/><rect x="396.0" y="105.5" width="0.8" height="1.7" fill="#fff"/><rect x="406.3" y="99.9" width="1.1" height="1.1" fill="#fff"/><rect x="401.3" y="99.2" width="1.6" height="1.8" fill="#fff"/><rect x="403.3" y="108.6" width="0.9" height="0.9" fill="#fff"/><rect x="400.9" y="102.9" width="1.6" height="1.0" fill="#fff"/><rect x="394.5" y="120.7" width="1.3" height="0.9" fill="#fff"/>
<path d="M375,117.7 L372.2,124 L374.3,131 L372.9,134.4 L364.5,136.5 L363.1,142 L367.3,146.3 L361.7,156 L365.2,161.6 L367.3,170 L368,176 L370.1,176.2 L372.9,179 L370.8,187.3 L377.1,188.7 L379.9,197 L382.7,201.3 L386.8,205.4 L391,209.6 L393.8,205.4 L392.4,199.9 L389.6,192.9 L391,185.9 L389.6,181.7 L386.8,176.2 L389.6,173.4 L384,170.6 L381.3,165 L379.9,165.8 L381.3,157.4 L388.2,154.6 L389.6,149.7 L382,151.8 L377.8,146.3 L378.5,138 L377,131 Z" fill="#ffffff" stroke="#ffffff" stroke-width="1.2" stroke-linejoin="round"/>
<path d="M376.5,151 L377.5,160" stroke="#404040" stroke-width="1.3"/><path d="M393,178 L398,176 L401,183 L404,190 L406,198 L403,205 L397,207 L393,201 L396,194 L391,186Z" fill="#fff"/><path d="M380,195 L372,204" fill="none" stroke="#ffffff" stroke-width="2.5" stroke-linejoin="round" stroke-linecap="round"/>
<path d="M386,204 L388,211" fill="none" stroke="#ffffff" stroke-width="2.5" stroke-linejoin="round" stroke-linecap="round"/>
<path d="M393,206 L398,212" fill="none" stroke="#ffffff" stroke-width="2" stroke-linejoin="round" stroke-linecap="round"/>
<path d="M371,188 L364,192" fill="none" stroke="#ffffff" stroke-width="2" stroke-linejoin="round" stroke-linecap="round"/>
<path d="M432.9,115.6 L431.5,121.2 L438.5,125.3 L437.8,131 L430.1,133.7 L431.5,137.9 L435,140.7 L432.9,147.7 L430.1,153.2 L427.3,164.4 L425.9,170 L427.3,179 L423.1,185.9 L428.7,192.9 L425.9,198.5 L430.1,202 L432.9,198.5 L434.3,192.9 L438.5,194.3 L435.7,187.3 L441.3,185.9 L437.1,181.7 L435.7,172 L439.9,170.6 L447,175 L450,168 L444,165 L446.8,165.8 L449.6,160.2 L446.8,156 L449.6,149.1 L445.4,146.3 L441.3,143.5 L445.4,139.3 L441.3,136.5 L440,128 L436,121 L434,117 Z" fill="#ffffff" stroke="#ffffff" stroke-width="1.2" stroke-linejoin="round"/>
<path d="M424,176 L418,182 L413,189 L410,194" fill="none" stroke="#ffffff" stroke-width="2.6" stroke-linejoin="round" stroke-linecap="round"/>
<path d="M409,197 L417,193 L425,195 L428,202 L422,207 L413,205Z" fill="#fff"/><path d="M421,155 L427,157" fill="none" stroke="#ffffff" stroke-width="2.5" stroke-linejoin="round" stroke-linecap="round"/>
<path d="M424,200 L418,208" fill="none" stroke="#ffffff" stroke-width="2.5" stroke-linejoin="round" stroke-linecap="round"/>
<path d="M430,201 L434,209" fill="none" stroke="#ffffff" stroke-width="2.5" stroke-linejoin="round" stroke-linecap="round"/>
<path d="M440,192 L447,198" fill="none" stroke="#ffffff" stroke-width="2" stroke-linejoin="round" stroke-linecap="round"/>
<path d="M446,160 L452,165" fill="none" stroke="#ffffff" stroke-width="2" stroke-linejoin="round" stroke-linecap="round"/>
<rect x="407.9" y="139.5" width="1.5" height="2.0" fill="#fff"/><rect x="415.0" y="151.5" width="1.3" height="1.4" fill="#fff"/><rect x="399.7" y="152.9" width="1.5" height="1.8" fill="#fff"/><rect x="403.3" y="143.0" width="1.8" height="2.0" fill="#fff"/><rect x="414.8" y="153.5" width="1.8" height="1.7" fill="#fff"/><rect x="401.0" y="148.3" width="1.4" height="1.0" fill="#fff"/><rect x="396.6" y="144.0" width="1.3" height="1.7" fill="#fff"/><rect x="417.0" y="147.1" width="1.9" height="2.0" fill="#fff"/><rect x="417.0" y="145.6" width="1.2" height="1.2" fill="#fff"/><rect x="400.3" y="142.7" width="1.6" height="1.9" fill="#fff"/><rect x="414.5" y="147.6" width="1.7" height="1.8" fill="#fff"/><rect x="397.9" y="150.9" width="1.9" height="1.8" fill="#fff"/><rect x="412.5" y="147.6" width="1.2" height="1.8" fill="#fff"/><rect x="403.3" y="153.4" width="2.0" height="1.4" fill="#fff"/><rect x="404.8" y="156.0" width="1.7" height="1.2" fill="#fff"/><rect x="398.8" y="141.7" width="1.9" height="1.8" fill="#fff"/><rect x="399.2" y="153.9" width="2.0" height="1.7" fill="#fff"/><rect x="403.7" y="148.9" width="1.1" height="1.0" fill="#fff"/><rect x="417.4" y="150.7" width="1.5" height="1.9" fill="#fff"/><rect x="405.5" y="154.7" width="1.8" height="1.2" fill="#fff"/><rect x="401.5" y="144.3" width="1.2" height="1.6" fill="#fff"/><rect x="401.7" y="146.5" width="1.1" height="1.9" fill="#fff"/><rect x="403.8" y="147.2" width="1.6" height="1.9" fill="#fff"/><rect x="405.3" y="155.5" width="1.5" height="1.5" fill="#fff"/><rect x="407.5" y="139.3" width="1.4" height="1.2" fill="#fff"/><rect x="396.1" y="153.4" width="1.2" height="1.5" fill="#fff"/><rect x="412.0" y="149.0" width="1.3" height="1.5" fill="#fff"/><rect x="408.2" y="153.1" width="1.1" height="1.6" fill="#fff"/><rect x="401.5" y="144.0" width="1.8" height="1.5" fill="#fff"/><rect x="408.4" y="152.7" width="1.9" height="1.4" fill="#fff"/><rect x="409.5" y="148.1" width="1.5" height="1.7" fill="#fff"/><rect x="406.0" y="148.6" width="1.5" height="1.9" fill="#fff"/><rect x="411.4" y="154.8" width="1.9" height="1.3" fill="#fff"/><rect x="408.3" y="156.0" width="1.8" height="1.1" fill="#fff"/><rect x="398.7" y="147.0" width="1.1" height="1.2" fill="#fff"/><rect x="397.6" y="151.1" width="1.8" height="1.9" fill="#fff"/><rect x="399.4" y="151.9" width="1.7" height="1.1" fill="#fff"/><rect x="415.4" y="156.4" width="1.2" height="2.0" fill="#fff"/><rect x="404.8" y="147.8" width="2.0" height="1.8" fill="#fff"/><rect x="399.6" y="146.8" width="1.5" height="1.3" fill="#fff"/><rect x="400.3" y="144.7" width="1.7" height="1.0" fill="#fff"/><rect x="408.2" y="146.9" width="1.0" height="1.3" fill="#fff"/><rect x="409.7" y="148.2" width="1.1" height="2.0" fill="#fff"/><rect x="413.3" y="156.5" width="1.1" height="1.3" fill="#fff"/><rect x="396.9" y="153.0" width="1.3" height="1.1" fill="#fff"/><rect x="405.3" y="155.4" width="1.8" height="1.3" fill="#fff"/><rect x="399.3" y="155.5" width="1.6" height="1.7" fill="#fff"/><rect x="398.0" y="140.0" width="1.7" height="1.4" fill="#fff"/><rect x="397.6" y="155.9" width="1.6" height="1.8" fill="#fff"/><rect x="397.8" y="154.4" width="1.1" height="1.9" fill="#fff"/><rect x="406.0" y="145.1" width="1.6" height="1.9" fill="#fff"/><rect x="401.9" y="141.3" width="1.5" height="1.2" fill="#fff"/><rect x="398.4" y="141.9" width="1.1" height="1.2" fill="#fff"/><rect x="402.9" y="144.5" width="1.8" height="1.3" fill="#fff"/><rect x="407.0" y="142.2" width="1.3" height="1.0" fill="#fff"/>
<path d="M398,142 C398.7,141.5 400.8,138.8 402,139 C403.2,139.2 405.0,141.7 405,143 C405.0,144.3 403.0,145.8 402,147 C401.0,148.2 398.8,148.8 399,150 C399.2,151.2 402.3,153.3 403,154" fill="none" stroke="#ffffff" stroke-width="1.4" stroke-linejoin="round" stroke-linecap="round"/>
<path d="M409,141 C409.8,140.7 412.7,138.5 414,139 C415.3,139.5 417.2,142.3 417,144 C416.8,145.7 414.2,147.3 413,149 C411.8,150.7 409.7,152.8 410,154 C410.3,155.2 414.2,155.7 415,156" fill="none" stroke="#ffffff" stroke-width="1.4" stroke-linejoin="round" stroke-linecap="round"/>
<path d="M385,150 L391,152" fill="none" stroke="#ffffff" stroke-width="4" stroke-linejoin="round" stroke-linecap="round"/>
<path d="M421,148 L426,145 L429,152 L423,154Z" fill="#fff"/>
<path d="M372,150 L375,163" stroke="#404040" stroke-width="1.6" stroke-linecap="round"/><path d="M381,182 L386,196" stroke="#404040" stroke-width="1.6" stroke-linecap="round"/><path d="M366,171 L372,176" stroke="#404040" stroke-width="1.3" stroke-linecap="round"/><path d="M437,150 L440,165" stroke="#404040" stroke-width="1.6" stroke-linecap="round"/><path d="M431,181 L436,191" stroke="#404040" stroke-width="1.6" stroke-linecap="round"/><path d="M375,140 L372,132" stroke="#404040" stroke-width="1.2" stroke-linecap="round"/><path d="M399,186 L401,197" stroke="#404040" stroke-width="1.4" stroke-linecap="round"/>
<circle cx="396" cy="165" r="0.8" fill="#ffffff"/><circle cx="410" cy="163" r="0.8" fill="#ffffff"/><circle cx="403" cy="170" r="0.8" fill="#ffffff"/><circle cx="414" cy="171" r="0.8" fill="#ffffff"/><circle cx="392" cy="130" r="0.8" fill="#ffffff"/><circle cx="418" cy="133" r="0.8" fill="#ffffff"/><circle cx="385" cy="128" r="0.8" fill="#ffffff"/><circle cx="424" cy="128" r="0.8" fill="#ffffff"/><circle cx="400" cy="160" r="0.8" fill="#ffffff"/><circle cx="408" cy="158" r="0.8" fill="#ffffff"/>
<circle cx="359" cy="150" r="0.6" fill="#ffffff"/><circle cx="357" cy="175" r="0.6" fill="#ffffff"/><circle cx="452" cy="180" r="0.6" fill="#ffffff"/><circle cx="457" cy="160" r="0.6" fill="#ffffff"/><circle cx="443" cy="122" r="0.6" fill="#ffffff"/><circle cx="365" cy="120" r="0.6" fill="#ffffff"/><circle cx="440" cy="200" r="0.6" fill="#ffffff"/><circle cx="370" cy="200" r="0.6" fill="#ffffff"/><circle cx="396" cy="213" r="0.6" fill="#ffffff"/><circle cx="412" cy="213" r="0.6" fill="#ffffff"/>
</g>
<g clip-path="url(#cy)">
<path d="M338,333 C338.4,329.7 339.3,319.5 340.5,313 C341.7,306.5 342.6,299.5 345,294 C347.4,288.5 350.8,284.3 355,280 C359.2,275.7 364.2,271.1 370,268 C375.8,264.9 383.3,262.9 390,261.5 C396.7,260.1 403.3,260.1 410,259.5 C416.7,258.9 423.3,257.2 430,258 C436.7,258.8 443.3,260.3 450,264 C456.7,267.7 464.7,274.0 470,280 C475.3,286.0 479.2,293.3 482,300 C484.8,306.7 485.7,314.2 486.5,320 C487.3,325.8 486.9,332.5 487,335" fill="none" stroke="#ffffff" stroke-width="3.3" stroke-linejoin="round" stroke-linecap="round"/>
<path d="M483,330 L489,334 L487,350 L484,366 L478,383 L468,397 L466,388 L468,372 L472,356 L477,342 Z" fill="#fff"/>
<path d="M343,300 L347,298 L345,315 L341,330 L336,336 L337,322Z" fill="#fff"/>
<path d="M354,287 C353.3,289.2 351.0,294.2 350,300 C349.0,305.8 348.3,318.3 348,322" fill="none" stroke="#ffffff" stroke-width="1.5" stroke-linejoin="round" stroke-linecap="round"/>
<ellipse cx="347.5" cy="320" rx="2" ry="3.5" fill="#fff"/>
<path d="M333,340 L331,348" fill="none" stroke="#ffffff" stroke-width="1.5" stroke-linejoin="round" stroke-linecap="round"/>
<path d="M343,343 L346,345" fill="none" stroke="#ffffff" stroke-width="2" stroke-linejoin="round" stroke-linecap="round"/>
<path d="M376,308 C377.5,306.8 381.0,302.8 385,301 C389.0,299.2 394.5,297.6 400,297 C405.5,296.4 413.2,296.3 418,297.5 C422.8,298.7 427.3,301.6 429,304 C430.7,306.4 428.2,310.7 428,312" fill="none" stroke="#ffffff" stroke-width="5" stroke-linejoin="round" stroke-linecap="round"/>
<ellipse cx="379" cy="308" rx="5" ry="4" fill="#fff"/><ellipse cx="426" cy="310" rx="3.5" ry="5" fill="#fff"/>
<path d="M397,318 C397.5,316.8 398.2,312.8 400,311 C401.8,309.2 405.0,308.0 408,307 C411.0,306.0 416.3,305.3 418,305" fill="none" stroke="#ffffff" stroke-width="1.8" stroke-linejoin="round" stroke-linecap="round"/>
<path d="M405,320 L414,318 L421,322 L424,330 L424,340 L418,343 L410,340 L406,333Z" fill="#fff" opacity=".7"/>
<rect x="405.5" y="316.5" width="1.9" height="1.7" fill="#fff"/><rect x="403.7" y="330.2" width="2.1" height="1.1" fill="#fff"/><rect x="422.6" y="329.0" width="1.6" height="2.0" fill="#fff"/><rect x="409.8" y="331.2" width="1.8" height="2.2" fill="#fff"/><rect x="408.3" y="341.0" width="1.8" height="1.8" fill="#fff"/><rect x="410.1" y="326.4" width="1.1" height="1.2" fill="#fff"/><rect x="400.1" y="338.2" width="1.3" height="1.2" fill="#fff"/><rect x="400.5" y="341.2" width="2.0" height="1.8" fill="#fff"/><rect x="406.5" y="323.3" width="1.4" height="1.6" fill="#fff"/><rect x="402.7" y="329.4" width="1.3" height="2.2" fill="#fff"/><rect x="427.2" y="332.4" width="1.3" height="2.2" fill="#fff"/><rect x="407.3" y="326.7" width="1.0" height="1.5" fill="#fff"/><rect x="412.2" y="331.1" width="1.2" height="1.6" fill="#fff"/><rect x="398.1" y="323.9" width="1.1" height="1.5" fill="#fff"/><rect x="399.3" y="316.7" width="1.4" height="1.3" fill="#fff"/><rect x="415.6" y="331.9" width="1.9" height="1.8" fill="#fff"/><rect x="419.5" y="342.4" width="1.5" height="1.4" fill="#fff"/><rect x="427.5" y="320.5" width="1.9" height="1.8" fill="#fff"/><rect x="399.3" y="341.1" width="2.1" height="1.8" fill="#fff"/><rect x="420.0" y="340.4" width="1.2" height="1.6" fill="#fff"/><rect x="413.1" y="341.0" width="2.0" height="2.0" fill="#fff"/><rect x="415.5" y="342.8" width="1.8" height="1.8" fill="#fff"/><rect x="404.9" y="316.9" width="1.2" height="1.4" fill="#fff"/><rect x="401.1" y="341.1" width="1.7" height="1.8" fill="#fff"/><rect x="416.8" y="336.4" width="1.6" height="1.0" fill="#fff"/><rect x="421.9" y="338.4" width="1.6" height="1.6" fill="#fff"/><rect x="417.8" y="318.0" width="1.9" height="1.3" fill="#fff"/><rect x="400.2" y="324.0" width="1.9" height="1.2" fill="#fff"/><rect x="420.2" y="345.3" width="1.6" height="1.5" fill="#fff"/><rect x="412.4" y="336.5" width="1.9" height="1.7" fill="#fff"/><rect x="417.3" y="318.3" width="1.2" height="1.3" fill="#fff"/><rect x="420.3" y="325.1" width="1.7" height="1.0" fill="#fff"/><rect x="399.8" y="324.1" width="1.8" height="1.8" fill="#fff"/><rect x="418.3" y="324.7" width="1.6" height="1.6" fill="#fff"/><rect x="412.0" y="319.6" width="2.1" height="1.2" fill="#fff"/><rect x="427.3" y="344.1" width="1.0" height="1.6" fill="#fff"/><rect x="422.6" y="345.0" width="1.5" height="1.3" fill="#fff"/><rect x="404.3" y="344.4" width="1.3" height="1.7" fill="#fff"/><rect x="402.3" y="331.7" width="2.1" height="1.2" fill="#fff"/><rect x="422.6" y="331.3" width="2.1" height="1.8" fill="#fff"/><rect x="404.9" y="342.9" width="1.6" height="1.0" fill="#fff"/><rect x="398.1" y="330.8" width="1.5" height="1.4" fill="#fff"/><rect x="402.2" y="326.3" width="1.4" height="2.0" fill="#fff"/><rect x="398.1" y="338.5" width="2.0" height="1.1" fill="#fff"/><rect x="425.8" y="337.4" width="2.1" height="1.3" fill="#fff"/><rect x="409.2" y="327.8" width="2.2" height="1.7" fill="#fff"/><rect x="408.8" y="328.8" width="1.3" height="1.1" fill="#fff"/><rect x="401.1" y="341.0" width="1.3" height="2.1" fill="#fff"/><rect x="405.5" y="324.0" width="1.6" height="1.2" fill="#fff"/><rect x="409.2" y="344.7" width="2.1" height="2.0" fill="#fff"/><rect x="416.9" y="343.4" width="2.1" height="1.7" fill="#fff"/><rect x="419.6" y="317.5" width="1.9" height="1.5" fill="#fff"/><rect x="420.6" y="335.3" width="1.3" height="1.1" fill="#fff"/><rect x="425.8" y="319.8" width="1.6" height="1.4" fill="#fff"/><rect x="406.9" y="338.2" width="2.2" height="1.3" fill="#fff"/><rect x="417.7" y="325.0" width="1.7" height="1.5" fill="#fff"/><rect x="403.0" y="320.8" width="1.2" height="2.1" fill="#fff"/><rect x="412.9" y="322.6" width="2.1" height="2.2" fill="#fff"/><rect x="411.5" y="320.2" width="1.2" height="1.1" fill="#fff"/><rect x="408.3" y="318.7" width="1.3" height="1.3" fill="#fff"/>
<path d="M408,322 C408.8,321.7 411.2,319.5 413,320 C414.8,320.5 417.8,322.7 419,325 C420.2,327.3 420.7,331.7 420,334 C419.3,336.3 415.8,338.2 415,339" fill="none" stroke="#ffffff" stroke-width="1.6" stroke-linejoin="round" stroke-linecap="round"/>
<path d="M389,343 L397,338 L405,340 L408,347 L400,349Z" fill="#fff"/><path d="M407,356 L414,355 L423,361 L421,365 L412,362Z" fill="#fff"/>
<path d="M392,332 L403,335" fill="none" stroke="#ffffff" stroke-width="2.2" stroke-linejoin="round" stroke-linecap="round"/>
<path d="M402,325 L407,322" fill="none" stroke="#ffffff" stroke-width="1.5" stroke-linejoin="round" stroke-linecap="round"/>
<path d="M380,339 L388,341" fill="none" stroke="#ffffff" stroke-width="1.3" stroke-linejoin="round" stroke-linecap="round"/>
<path d="M368,330 L372,338" fill="none" stroke="#ffffff" stroke-width="1.3" stroke-linejoin="round" stroke-linecap="round"/>
<rect x="439.2" y="342.2" width="1.4" height="1.1" fill="#fff"/><rect x="435.3" y="333.1" width="1.1" height="1.1" fill="#fff"/><rect x="426.6" y="326.9" width="1.6" height="0.9" fill="#fff"/><rect x="437.6" y="335.7" width="1.5" height="1.0" fill="#fff"/><rect x="431.8" y="326.2" width="1.1" height="1.2" fill="#fff"/><rect x="446.8" y="320.5" width="0.8" height="1.4" fill="#fff"/><rect x="447.4" y="331.8" width="1.3" height="0.8" fill="#fff"/><rect x="434.8" y="343.2" width="1.5" height="1.5" fill="#fff"/><rect x="427.7" y="323.9" width="1.2" height="1.3" fill="#fff"/><rect x="441.2" y="339.1" width="1.2" height="1.2" fill="#fff"/><rect x="426.0" y="339.6" width="1.0" height="1.5" fill="#fff"/><rect x="441.1" y="327.6" width="0.9" height="1.0" fill="#fff"/><rect x="440.9" y="337.5" width="0.9" height="0.9" fill="#fff"/><rect x="438.1" y="334.6" width="1.1" height="1.0" fill="#fff"/>
<path d="M348,370 C349.3,369.7 352.7,368.7 356,368 C359.3,367.3 364.0,366.3 368,366 C372.0,365.7 376.3,365.7 380,366 C383.7,366.3 387.3,366.7 390,368 C392.7,369.3 395.0,373.0 396,374" fill="none" stroke="#ffffff" stroke-width="1.8" stroke-linejoin="round" stroke-linecap="round"/>
<path d="M349,366 L352,375" fill="none" stroke="#ffffff" stroke-width="1.5" stroke-linejoin="round" stroke-linecap="round"/>
<path d="M330,362 L336,352" fill="none" stroke="#ffffff" stroke-width="1.5" stroke-linejoin="round" stroke-linecap="round"/>
<path d="M336,378 L340,372" fill="none" stroke="#ffffff" stroke-width="1.5" stroke-linejoin="round" stroke-linecap="round"/>
<path d="M345,383 L349,380" fill="none" stroke="#ffffff" stroke-width="1.3" stroke-linejoin="round" stroke-linecap="round"/>
<path d="M354,345 L362,348" fill="none" stroke="#ffffff" stroke-width="2" stroke-linejoin="round" stroke-linecap="round"/>
<path d="M370,355 L374,352" fill="none" stroke="#ffffff" stroke-width="1.3" stroke-linejoin="round" stroke-linecap="round"/>
<path d="M398,355 L404,356" fill="none" stroke="#ffffff" stroke-width="1.5" stroke-linejoin="round" stroke-linecap="round"/>
<rect x="346.8" y="362.6" width="2.0" height="1.6" fill="#fff"/><rect x="387.0" y="363.5" width="1.2" height="1.2" fill="#fff"/><rect x="392.3" y="377.3" width="1.3" height="1.0" fill="#fff"/><rect x="360.4" y="375.5" width="1.4" height="1.3" fill="#fff"/><rect x="341.6" y="337.0" width="1.3" height="1.4" fill="#fff"/><rect x="373.1" y="346.9" width="1.8" height="1.7" fill="#fff"/><rect x="360.8" y="347.3" width="2.0" height="1.3" fill="#fff"/><rect x="382.6" y="348.8" width="1.2" height="1.8" fill="#fff"/><rect x="346.4" y="392.1" width="1.5" height="1.2" fill="#fff"/><rect x="341.4" y="360.0" width="1.7" height="1.9" fill="#fff"/><rect x="336.1" y="358.6" width="1.2" height="2.0" fill="#fff"/><rect x="335.8" y="338.1" width="1.1" height="1.4" fill="#fff"/><rect x="390.3" y="354.8" width="1.2" height="1.9" fill="#fff"/><rect x="371.8" y="357.7" width="1.4" height="1.3" fill="#fff"/><rect x="337.7" y="335.2" width="1.3" height="1.4" fill="#fff"/><rect x="350.6" y="384.3" width="1.8" height="1.4" fill="#fff"/><rect x="329.4" y="363.4" width="1.4" height="1.9" fill="#fff"/><rect x="339.3" y="356.9" width="1.9" height="1.0" fill="#fff"/><rect x="354.3" y="383.7" width="1.8" height="1.0" fill="#fff"/><rect x="328.4" y="338.8" width="1.9" height="1.3" fill="#fff"/><rect x="349.4" y="351.3" width="2.0" height="1.6" fill="#fff"/><rect x="344.1" y="378.0" width="1.3" height="1.3" fill="#fff"/><rect x="389.2" y="373.0" width="1.9" height="1.0" fill="#fff"/><rect x="342.1" y="363.5" width="2.0" height="2.0" fill="#fff"/><rect x="352.7" y="350.1" width="1.4" height="1.5" fill="#fff"/><rect x="381.4" y="379.3" width="1.8" height="1.8" fill="#fff"/><rect x="367.9" y="354.7" width="1.3" height="1.4" fill="#fff"/><rect x="339.6" y="380.2" width="1.2" height="1.1" fill="#fff"/><rect x="328.3" y="368.2" width="1.3" height="2.0" fill="#fff"/><rect x="344.3" y="340.0" width="1.1" height="1.5" fill="#fff"/><rect x="375.0" y="361.8" width="1.2" height="1.4" fill="#fff"/><rect x="368.8" y="375.4" width="1.7" height="1.8" fill="#fff"/><rect x="371.8" y="342.3" width="1.8" height="1.3" fill="#fff"/><rect x="365.1" y="357.4" width="1.7" height="1.2" fill="#fff"/><rect x="343.1" y="349.7" width="1.2" height="1.9" fill="#fff"/><rect x="365.9" y="354.6" width="1.4" height="2.0" fill="#fff"/><rect x="361.0" y="348.9" width="1.8" height="1.7" fill="#fff"/><rect x="358.8" y="384.1" width="1.8" height="1.9" fill="#fff"/><rect x="328.8" y="352.6" width="1.1" height="1.2" fill="#fff"/><rect x="393.1" y="370.0" width="1.9" height="1.4" fill="#fff"/><rect x="385.8" y="361.9" width="1.3" height="1.8" fill="#fff"/><rect x="367.1" y="372.2" width="1.2" height="1.4" fill="#fff"/><rect x="335.8" y="347.2" width="1.3" height="1.6" fill="#fff"/><rect x="371.0" y="347.2" width="1.0" height="1.3" fill="#fff"/><rect x="372.8" y="346.1" width="1.3" height="1.2" fill="#fff"/><rect x="380.9" y="367.9" width="1.1" height="1.1" fill="#fff"/><rect x="353.3" y="368.0" width="1.6" height="1.1" fill="#fff"/><rect x="337.3" y="376.7" width="1.4" height="1.3" fill="#fff"/><rect x="347.2" y="392.2" width="1.3" height="1.6" fill="#fff"/><rect x="350.6" y="360.0" width="1.9" height="2.0" fill="#fff"/><rect x="351.1" y="346.8" width="1.7" height="1.2" fill="#fff"/><rect x="355.2" y="384.2" width="1.4" height="1.9" fill="#fff"/><rect x="357.8" y="344.8" width="1.0" height="1.6" fill="#fff"/><rect x="332.1" y="372.3" width="1.4" height="1.5" fill="#fff"/><rect x="336.1" y="352.0" width="1.5" height="1.9" fill="#fff"/><rect x="333.5" y="364.4" width="1.8" height="2.0" fill="#fff"/><rect x="339.6" y="342.6" width="1.9" height="2.0" fill="#fff"/><rect x="359.3" y="338.2" width="1.9" height="1.4" fill="#fff"/><rect x="388.4" y="372.2" width="1.8" height="1.2" fill="#fff"/><rect x="380.2" y="348.3" width="1.4" height="1.8" fill="#fff"/>
<rect x="387.7" y="324.6" width="1.0" height="1.1" fill="#fff"/><rect x="374.3" y="327.4" width="0.9" height="1.0" fill="#fff"/><rect x="383.2" y="334.6" width="0.8" height="1.2" fill="#fff"/><rect x="384.6" y="322.5" width="1.5" height="0.9" fill="#fff"/><rect x="377.8" y="329.7" width="1.3" height="1.0" fill="#fff"/><rect x="370.1" y="330.2" width="1.1" height="1.3" fill="#fff"/><rect x="371.2" y="328.1" width="0.8" height="1.3" fill="#fff"/><rect x="373.0" y="325.3" width="1.4" height="1.4" fill="#fff"/><rect x="371.7" y="324.5" width="1.2" height="0.9" fill="#fff"/><rect x="357.5" y="328.0" width="0.9" height="1.2" fill="#fff"/><rect x="373.9" y="322.6" width="1.3" height="0.9" fill="#fff"/><rect x="383.5" y="332.9" width="1.2" height="0.8" fill="#fff"/><rect x="373.7" y="327.3" width="1.6" height="0.9" fill="#fff"/><rect x="388.9" y="335.9" width="1.4" height="1.5" fill="#fff"/>
<path d="M446,372 L452,364 L463,356 L466,362 L466,372 L462,381 L455,383 L450,379Z" fill="#fff"/>
<path d="M443,375 L452,368" fill="none" stroke="#ffffff" stroke-width="3" stroke-linejoin="round" stroke-linecap="round"/>
<path d="M457,351 L462,349" fill="none" stroke="#ffffff" stroke-width="1.8" stroke-linejoin="round" stroke-linecap="round"/>
<path d="M463,347 L465,352" fill="none" stroke="#ffffff" stroke-width="1.5" stroke-linejoin="round" stroke-linecap="round"/>
<path d="M486,355 L484,362" fill="none" stroke="#ffffff" stroke-width="1.8" stroke-linejoin="round" stroke-linecap="round"/>
<circle cx="437" cy="388" r="0.8" fill="#ffffff"/><circle cx="436" cy="398" r="0.8" fill="#ffffff"/><circle cx="442" cy="392" r="0.8" fill="#ffffff"/><circle cx="339" cy="375" r="0.8" fill="#ffffff"/><circle cx="342" cy="385" r="0.8" fill="#ffffff"/><circle cx="350" cy="400" r="0.8" fill="#ffffff"/><circle cx="356" cy="357" r="0.8" fill="#ffffff"/><circle cx="360" cy="345" r="0.8" fill="#ffffff"/><circle cx="372" cy="328" r="0.8" fill="#ffffff"/><circle cx="426" cy="352" r="0.8" fill="#ffffff"/><circle cx="431" cy="338" r="0.8" fill="#ffffff"/><circle cx="360" cy="315" r="0.8" fill="#ffffff"/><circle cx="366" cy="322" r="0.8" fill="#ffffff"/><circle cx="450" cy="330" r="0.8" fill="#ffffff"/><circle cx="470" cy="310" r="0.8" fill="#ffffff"/><circle cx="475" cy="318" r="0.8" fill="#ffffff"/><circle cx="455" cy="305" r="0.8" fill="#ffffff"/><circle cx="458" cy="312" r="0.8" fill="#ffffff"/><circle cx="418" cy="355" r="0.8" fill="#ffffff"/><circle cx="428" cy="366" r="0.8" fill="#ffffff"/>
<circle cx="398" cy="285" r="0.6" fill="#ffffff"/><circle cx="420" cy="290" r="0.6" fill="#ffffff"/><circle cx="365" cy="300" r="0.6" fill="#ffffff"/><circle cx="437" cy="395" r="0.6" fill="#ffffff"/><circle cx="392" cy="360" r="0.6" fill="#ffffff"/><circle cx="383" cy="294" r="0.6" fill="#ffffff"/><circle cx="395" cy="300" r="0.6" fill="#ffffff"/>
</g>
<g clip-path="url(#cg)">
<path d="M619,401 C618.3,398.8 616.1,393.2 615,388 C613.9,382.8 613.1,376.3 612.5,370 C611.9,363.7 611.5,356.7 611.3,350 C611.1,343.3 611.0,337.3 611.5,330 C612.0,322.7 612.2,313.7 614,306 C615.8,298.3 618.5,289.8 622,284 C625.5,278.2 630.1,275.0 635,271.5 C639.9,268.0 646.0,264.9 651.5,263 C657.0,261.1 661.8,260.0 668,260 C674.2,260.0 682.8,261.0 689,263 C695.2,265.0 700.5,268.3 705,272 C709.5,275.7 713.2,280.3 716,285 C718.8,289.7 720.7,292.5 722,300 C723.3,307.5 723.6,321.7 724,330 C724.4,338.3 723.9,343.7 724.5,350 C725.1,356.3 727.9,361.7 727.5,368 C727.1,374.3 724.2,382.7 722,388 C719.8,393.3 715.3,398.0 714,400" fill="none" stroke="#ffffff" stroke-width="3.0" stroke-linejoin="round" stroke-linecap="round"/>
<path d="M617,300 C618.3,297.5 621.7,289.2 625,285 C628.3,280.8 632.5,277.6 637,274.5 C641.5,271.4 646.8,268.3 652,266.5 C657.2,264.7 662.0,263.5 668,263.5 C674.0,263.5 682.2,264.6 688,266.5 C693.8,268.4 698.8,271.4 703,275 C707.2,278.6 710.3,283.5 713,288 C715.7,292.5 718.0,299.7 719,302" fill="none" stroke="#ffffff" stroke-width="1.2" stroke-linejoin="round" stroke-linecap="round"/>
<path d="M626.9,297 L629.5,291.7 L634.8,287.7 L639.7,281.5 L643.5,288.5 L647.6,277.5 L652,284.7 L657.5,273.8 L661,281.8 L664.5,275 L665,288 L668,293 L670.4,283.7 L672.4,272 L676.3,279.8 L680.3,276 L682.8,285.7 L686.2,280 L689,289.7 L694.1,291.7 L703,294 L699,299.6 L708.5,301.5 L698.1,306.5 L694.1,313.4 L690.2,319.3 L680.3,324 L670.4,327 L658.5,324 L650.6,318 L644.7,310 L636.8,308 L630.8,305 L626.9,302 Z" fill="#ffffff" stroke="#ffffff" stroke-width="2.0" stroke-linejoin="round"/>
<path d="M645,300 L690,300 L690,322 L648,320 Z" fill="#ffffff" stroke="#ffffff" stroke-width="8" stroke-linejoin="round"/>
<path d="M643,274 L643.5,288" stroke="#404040" stroke-width="3.4" stroke-linecap="round"/><path d="M652,270 L652.5,285" stroke="#404040" stroke-width="3.2" stroke-linecap="round"/><path d="M668,268 L668,292" stroke="#404040" stroke-width="3.2" stroke-linecap="round"/><path d="M684,272 L684,287" stroke="#404040" stroke-width="3.2" stroke-linecap="round"/><path d="M692,280 L691,292" stroke="#404040" stroke-width="3" stroke-linecap="round"/><path d="M633,281 L637,291" stroke="#404040" stroke-width="2.6" stroke-linecap="round"/><path d="M700,288 L696,297" stroke="#404040" stroke-width="2.4" stroke-linecap="round"/><path d="M704,304 L698,307" stroke="#404040" stroke-width="1.8" stroke-linecap="round"/><path d="M630,300 L636,302" stroke="#404040" stroke-width="1.8" stroke-linecap="round"/>
<path d="M655.6,297.6 L680.3,297.6 Q676,304.5 668,304.8 Q659,304.5 655.6,297.6Z" fill="#404040"/>
<path d="M667.9,305.5 L667.9,323" stroke="#404040" stroke-width="2.2" opacity=".8"/>
<rect x="653.7" y="321.6" width="1.1" height="1.4" fill="#404040"/><rect x="686.2" y="303.6" width="1.3" height="1.4" fill="#404040"/><rect x="647.9" y="307.7" width="1.3" height="0.9" fill="#404040"/><rect x="685.3" y="306.0" width="1.3" height="0.9" fill="#404040"/><rect x="667.6" y="320.2" width="0.9" height="1.0" fill="#404040"/><rect x="667.8" y="307.0" width="0.8" height="0.9" fill="#404040"/><rect x="652.3" y="320.6" width="1.2" height="1.3" fill="#404040"/><rect x="652.6" y="317.3" width="0.9" height="1.1" fill="#404040"/><rect x="673.6" y="307.9" width="1.3" height="1.1" fill="#404040"/><rect x="671.1" y="319.4" width="0.9" height="1.4" fill="#404040"/>
<path d="M638.7,328.2 L627.9,317.4" fill="none" stroke="#ffffff" stroke-width="2.8" stroke-linejoin="round" stroke-linecap="round"/>
<path d="M638.7,328.2 L625.5,330" fill="none" stroke="#ffffff" stroke-width="2.4" stroke-linejoin="round" stroke-linecap="round"/>
<path d="M638.7,328.2 L632.8,336.5" fill="none" stroke="#ffffff" stroke-width="2.6" stroke-linejoin="round" stroke-linecap="round"/>
<path d="M638.7,328.2 L644.7,335.5" fill="none" stroke="#ffffff" stroke-width="2.6" stroke-linejoin="round" stroke-linecap="round"/>
<path d="M638.7,328.2 L652,333.5" fill="none" stroke="#ffffff" stroke-width="2.2" stroke-linejoin="round" stroke-linecap="round"/>
<path d="M638.7,328.2 L644.7,320.3" fill="none" stroke="#ffffff" stroke-width="2.4" stroke-linejoin="round" stroke-linecap="round"/>
<ellipse cx="638.7" cy="328.2" rx="4.2" ry="3.6" fill="#fff"/><path d="M699.1,326.3 L706,316.4" fill="none" stroke="#ffffff" stroke-width="2.8" stroke-linejoin="round" stroke-linecap="round"/>
<path d="M699.1,326.3 L711,327.3" fill="none" stroke="#ffffff" stroke-width="2.4" stroke-linejoin="round" stroke-linecap="round"/>
<path d="M699.1,326.3 L708,336.5" fill="none" stroke="#ffffff" stroke-width="2.6" stroke-linejoin="round" stroke-linecap="round"/>
<path d="M699.1,326.3 L698.1,337.5" fill="none" stroke="#ffffff" stroke-width="2.6" stroke-linejoin="round" stroke-linecap="round"/>
<path d="M699.1,326.3 L686.2,334.2" fill="none" stroke="#ffffff" stroke-width="2.2" stroke-linejoin="round" stroke-linecap="round"/>
<path d="M699.1,326.3 L692.2,319.3" fill="none" stroke="#ffffff" stroke-width="2.4" stroke-linejoin="round" stroke-linecap="round"/>
<ellipse cx="699.1" cy="326.3" rx="4.2" ry="3.6" fill="#fff"/>
<rect x="675.7" y="342.3" width="1.8" height="1.3" fill="#fff"/><rect x="663.9" y="348.2" width="1.4" height="1.2" fill="#fff"/><rect x="680.7" y="336.8" width="1.8" height="1.3" fill="#fff"/><rect x="673.8" y="346.6" width="1.3" height="1.0" fill="#fff"/><rect x="649.5" y="338.4" width="1.6" height="1.4" fill="#fff"/><rect x="670.6" y="350.3" width="1.1" height="1.2" fill="#fff"/><rect x="652.7" y="341.7" width="1.2" height="1.6" fill="#fff"/><rect x="673.9" y="339.3" width="1.6" height="1.5" fill="#fff"/><rect x="653.9" y="351.0" width="1.2" height="1.1" fill="#fff"/><rect x="652.2" y="346.2" width="1.9" height="1.8" fill="#fff"/><rect x="665.7" y="340.2" width="1.0" height="1.6" fill="#fff"/><rect x="672.7" y="341.6" width="1.6" height="1.4" fill="#fff"/><rect x="689.2" y="347.7" width="1.2" height="1.9" fill="#fff"/><rect x="649.9" y="344.5" width="1.4" height="1.2" fill="#fff"/><rect x="650.6" y="348.5" width="1.0" height="1.6" fill="#fff"/><rect x="689.4" y="338.3" width="1.2" height="1.6" fill="#fff"/><rect x="670.3" y="346.3" width="1.8" height="1.2" fill="#fff"/><rect x="661.6" y="340.8" width="1.0" height="1.9" fill="#fff"/><rect x="682.5" y="347.4" width="1.0" height="1.8" fill="#fff"/><rect x="680.8" y="343.4" width="1.7" height="1.5" fill="#fff"/><rect x="657.9" y="337.7" width="1.2" height="1.0" fill="#fff"/><rect x="662.8" y="348.0" width="1.7" height="1.8" fill="#fff"/><rect x="679.3" y="340.3" width="1.6" height="1.4" fill="#fff"/><rect x="682.7" y="344.4" width="1.3" height="1.6" fill="#fff"/><rect x="690.5" y="339.5" width="1.9" height="1.0" fill="#fff"/><rect x="659.5" y="339.8" width="1.7" height="1.9" fill="#fff"/><rect x="680.8" y="341.2" width="1.9" height="1.3" fill="#fff"/><rect x="658.5" y="350.5" width="1.6" height="1.7" fill="#fff"/><rect x="668.7" y="349.4" width="1.7" height="1.9" fill="#fff"/><rect x="667.2" y="347.6" width="1.6" height="1.3" fill="#fff"/><rect x="657.3" y="346.0" width="1.1" height="1.9" fill="#fff"/><rect x="652.7" y="350.9" width="1.3" height="1.1" fill="#fff"/><rect x="678.5" y="346.1" width="1.7" height="1.7" fill="#fff"/><rect x="650.9" y="345.4" width="1.4" height="1.8" fill="#fff"/><rect x="684.1" y="350.3" width="1.1" height="1.9" fill="#fff"/><rect x="652.7" y="339.3" width="1.1" height="1.0" fill="#fff"/><rect x="685.3" y="349.0" width="1.6" height="1.8" fill="#fff"/><rect x="675.8" y="340.6" width="1.1" height="1.1" fill="#fff"/><rect x="681.3" y="339.3" width="1.3" height="1.4" fill="#fff"/><rect x="648.9" y="340.1" width="1.3" height="1.7" fill="#fff"/><rect x="664.2" y="341.1" width="2.0" height="1.5" fill="#fff"/><rect x="685.5" y="345.9" width="1.0" height="1.4" fill="#fff"/><rect x="667.2" y="348.4" width="1.3" height="1.7" fill="#fff"/><rect x="671.7" y="339.5" width="1.9" height="1.1" fill="#fff"/><rect x="684.1" y="338.7" width="1.0" height="1.2" fill="#fff"/><rect x="669.6" y="348.7" width="1.2" height="1.5" fill="#fff"/><rect x="663.3" y="349.3" width="1.3" height="1.9" fill="#fff"/><rect x="660.5" y="339.4" width="1.7" height="1.5" fill="#fff"/><rect x="652.8" y="346.2" width="1.1" height="1.8" fill="#fff"/><rect x="678.7" y="348.6" width="1.6" height="1.4" fill="#fff"/><rect x="665.7" y="342.3" width="1.9" height="1.1" fill="#fff"/><rect x="687.1" y="336.4" width="1.2" height="1.3" fill="#fff"/><rect x="687.7" y="344.0" width="1.4" height="1.9" fill="#fff"/><rect x="658.3" y="343.4" width="1.5" height="1.8" fill="#fff"/><rect x="681.1" y="346.3" width="1.3" height="1.3" fill="#fff"/><rect x="654.8" y="349.5" width="1.7" height="1.7" fill="#fff"/><rect x="655.5" y="343.0" width="1.8" height="1.6" fill="#fff"/><rect x="653.5" y="343.4" width="1.9" height="1.2" fill="#fff"/><rect x="656.4" y="340.8" width="1.7" height="1.8" fill="#fff"/><rect x="654.8" y="338.5" width="1.2" height="1.3" fill="#fff"/><rect x="671.0" y="338.6" width="1.3" height="1.2" fill="#fff"/><rect x="690.9" y="347.7" width="1.1" height="2.0" fill="#fff"/><rect x="652.5" y="342.1" width="2.0" height="1.8" fill="#fff"/><rect x="680.3" y="343.0" width="1.2" height="1.6" fill="#fff"/><rect x="652.7" y="339.3" width="1.4" height="1.0" fill="#fff"/><rect x="665.6" y="348.7" width="1.7" height="1.5" fill="#fff"/><rect x="675.8" y="343.4" width="1.1" height="1.6" fill="#fff"/><rect x="665.8" y="347.9" width="1.9" height="1.4" fill="#fff"/><rect x="673.3" y="348.0" width="1.4" height="1.2" fill="#fff"/><rect x="679.8" y="350.1" width="1.8" height="1.7" fill="#fff"/>
<path d="M650,342 C651.7,341.5 656.7,339.2 660,339 C663.3,338.8 666.3,341.0 670,341 C673.7,341.0 678.7,338.8 682,339 C685.3,339.2 688.7,341.5 690,342" fill="none" stroke="#ffffff" stroke-width="1.6" stroke-linejoin="round" stroke-linecap="round"/>
<path d="M640,374 Q640,360 650,351 Q658,356 659,367 Q657,378 650,380Z" fill="#fff"/>
<path d="M677,377 Q678,361 690,351 Q694,357 692,366 Q689,375 684,380Z" fill="#fff"/>
<path d="M634,360 C634.3,361.7 636.0,366.7 636,370 C636.0,373.3 634.3,378.3 634,380" fill="none" stroke="#ffffff" stroke-width="1.8" stroke-linejoin="round" stroke-linecap="round"/>
<path d="M694,360 C694.7,361.8 698.0,367.5 698,371 C698.0,374.5 694.7,379.3 694,381" fill="none" stroke="#ffffff" stroke-width="1.8" stroke-linejoin="round" stroke-linecap="round"/>
<rect x="623.8" y="377.6" width="2.0" height="1.7" fill="#fff"/><rect x="615.7" y="374.0" width="1.3" height="1.7" fill="#fff"/><rect x="622.7" y="379.9" width="2.0" height="1.5" fill="#fff"/><rect x="617.4" y="361.9" width="1.9" height="1.7" fill="#fff"/><rect x="621.1" y="395.1" width="1.4" height="2.0" fill="#fff"/><rect x="622.7" y="357.2" width="1.8" height="2.4" fill="#fff"/><rect x="611.6" y="368.0" width="1.4" height="2.1" fill="#fff"/><rect x="625.1" y="366.3" width="1.3" height="1.9" fill="#fff"/><rect x="619.1" y="380.2" width="1.8" height="2.0" fill="#fff"/><rect x="623.4" y="366.5" width="1.7" height="2.3" fill="#fff"/><rect x="614.2" y="377.9" width="1.7" height="2.1" fill="#fff"/><rect x="616.3" y="334.0" width="1.5" height="1.7" fill="#fff"/><rect x="611.2" y="359.3" width="1.7" height="2.0" fill="#fff"/><rect x="616.3" y="348.6" width="1.5" height="2.1" fill="#fff"/><rect x="625.1" y="366.9" width="1.5" height="2.2" fill="#fff"/><rect x="616.9" y="344.8" width="1.4" height="2.1" fill="#fff"/><rect x="623.1" y="374.4" width="1.8" height="1.9" fill="#fff"/><rect x="616.3" y="374.7" width="2.2" height="2.2" fill="#fff"/><rect x="618.0" y="350.6" width="1.9" height="1.4" fill="#fff"/><rect x="623.5" y="354.8" width="2.2" height="1.5" fill="#fff"/><rect x="616.6" y="347.7" width="1.7" height="1.4" fill="#fff"/><rect x="615.2" y="347.1" width="1.6" height="1.8" fill="#fff"/><rect x="617.4" y="374.6" width="2.0" height="1.6" fill="#fff"/><rect x="624.9" y="389.8" width="1.3" height="2.2" fill="#fff"/><rect x="624.6" y="384.9" width="1.4" height="2.2" fill="#fff"/><rect x="620.8" y="347.5" width="1.3" height="1.4" fill="#fff"/><rect x="614.5" y="384.3" width="1.6" height="1.4" fill="#fff"/><rect x="624.6" y="385.4" width="1.4" height="2.3" fill="#fff"/><rect x="620.1" y="384.7" width="2.0" height="2.3" fill="#fff"/><rect x="622.8" y="388.7" width="1.4" height="2.0" fill="#fff"/><rect x="619.0" y="381.9" width="1.7" height="2.3" fill="#fff"/><rect x="619.3" y="348.5" width="1.5" height="1.4" fill="#fff"/><rect x="618.4" y="334.1" width="1.8" height="1.4" fill="#fff"/><rect x="618.4" y="364.9" width="1.8" height="2.2" fill="#fff"/><rect x="618.0" y="369.4" width="2.0" height="2.2" fill="#fff"/><rect x="616.6" y="359.3" width="2.4" height="1.3" fill="#fff"/><rect x="620.6" y="374.5" width="1.2" height="1.9" fill="#fff"/><rect x="621.2" y="395.2" width="1.6" height="2.4" fill="#fff"/><rect x="618.7" y="363.9" width="2.3" height="1.2" fill="#fff"/><rect x="621.8" y="373.8" width="1.6" height="2.2" fill="#fff"/><rect x="616.5" y="363.2" width="1.8" height="2.1" fill="#fff"/><rect x="614.2" y="360.5" width="1.7" height="1.9" fill="#fff"/><rect x="623.4" y="350.5" width="2.2" height="1.7" fill="#fff"/><rect x="618.6" y="349.0" width="1.8" height="2.4" fill="#fff"/><rect x="620.8" y="385.4" width="1.6" height="1.6" fill="#fff"/><rect x="615.5" y="371.1" width="2.0" height="2.1" fill="#fff"/><rect x="624.3" y="368.2" width="1.3" height="1.6" fill="#fff"/><rect x="611.1" y="343.3" width="2.3" height="1.9" fill="#fff"/><rect x="620.9" y="385.2" width="2.3" height="1.9" fill="#fff"/><rect x="620.3" y="373.9" width="2.0" height="1.9" fill="#fff"/><rect x="621.2" y="344.9" width="2.0" height="1.7" fill="#fff"/><rect x="622.4" y="337.1" width="1.4" height="1.2" fill="#fff"/><rect x="622.6" y="394.0" width="2.0" height="1.6" fill="#fff"/><rect x="623.3" y="385.1" width="1.9" height="1.5" fill="#fff"/><rect x="615.5" y="359.5" width="1.6" height="1.7" fill="#fff"/><rect x="620.6" y="395.4" width="1.3" height="1.9" fill="#fff"/><rect x="611.6" y="338.3" width="2.2" height="1.9" fill="#fff"/><rect x="624.8" y="361.3" width="1.2" height="1.7" fill="#fff"/><rect x="619.9" y="395.6" width="2.4" height="1.8" fill="#fff"/><rect x="617.2" y="337.1" width="2.0" height="1.5" fill="#fff"/><rect x="613.3" y="331.1" width="1.2" height="2.0" fill="#fff"/><rect x="612.9" y="331.2" width="2.1" height="1.5" fill="#fff"/><rect x="622.0" y="343.1" width="1.3" height="2.1" fill="#fff"/><rect x="621.7" y="389.9" width="2.1" height="1.3" fill="#fff"/><rect x="620.4" y="379.6" width="1.8" height="2.3" fill="#fff"/><rect x="615.7" y="381.1" width="1.4" height="2.2" fill="#fff"/><rect x="618.3" y="334.2" width="1.6" height="1.9" fill="#fff"/><rect x="617.6" y="377.4" width="1.4" height="2.2" fill="#fff"/><rect x="616.4" y="375.1" width="2.0" height="1.7" fill="#fff"/><rect x="616.8" y="385.0" width="2.3" height="2.1" fill="#fff"/><rect x="619.5" y="350.5" width="1.3" height="2.4" fill="#fff"/><rect x="621.5" y="387.9" width="1.6" height="1.9" fill="#fff"/><rect x="625.7" y="388.2" width="1.9" height="1.6" fill="#fff"/><rect x="617.4" y="392.2" width="1.7" height="2.0" fill="#fff"/><rect x="620.0" y="392.7" width="2.2" height="1.5" fill="#fff"/><rect x="611.0" y="348.4" width="1.7" height="1.9" fill="#fff"/><rect x="623.2" y="392.1" width="1.3" height="2.2" fill="#fff"/><rect x="623.2" y="390.7" width="1.9" height="1.5" fill="#fff"/><rect x="623.8" y="386.5" width="2.0" height="2.3" fill="#fff"/><rect x="616.2" y="336.0" width="1.9" height="2.2" fill="#fff"/>
<rect x="635.0" y="350.5" width="1.6" height="1.7" fill="#fff"/><rect x="628.5" y="349.3" width="1.3" height="1.8" fill="#fff"/><rect x="633.1" y="360.7" width="1.1" height="1.8" fill="#fff"/><rect x="632.8" y="350.5" width="1.6" height="1.9" fill="#fff"/><rect x="634.4" y="363.5" width="1.5" height="1.6" fill="#fff"/><rect x="624.6" y="348.7" width="1.2" height="1.7" fill="#fff"/><rect x="627.1" y="365.4" width="1.4" height="1.5" fill="#fff"/><rect x="624.1" y="342.0" width="2.0" height="1.4" fill="#fff"/><rect x="633.0" y="347.0" width="1.6" height="1.3" fill="#fff"/><rect x="634.1" y="361.9" width="1.6" height="1.3" fill="#fff"/><rect x="632.9" y="359.2" width="1.9" height="1.8" fill="#fff"/><rect x="625.6" y="341.7" width="1.2" height="1.2" fill="#fff"/><rect x="623.2" y="342.3" width="1.6" height="1.9" fill="#fff"/><rect x="628.4" y="382.6" width="1.9" height="1.1" fill="#fff"/><rect x="630.4" y="357.9" width="1.1" height="2.0" fill="#fff"/><rect x="625.6" y="365.4" width="1.6" height="2.0" fill="#fff"/><rect x="631.4" y="357.7" width="1.4" height="1.2" fill="#fff"/><rect x="625.1" y="341.7" width="1.3" height="1.4" fill="#fff"/>
<rect x="724.6" y="379.7" width="2.0" height="2.4" fill="#fff"/><rect x="722.8" y="353.8" width="1.9" height="2.1" fill="#fff"/><rect x="713.7" y="355.4" width="1.5" height="1.3" fill="#fff"/><rect x="719.7" y="345.6" width="1.5" height="1.4" fill="#fff"/><rect x="722.8" y="335.8" width="2.1" height="1.4" fill="#fff"/><rect x="712.6" y="393.4" width="1.5" height="2.3" fill="#fff"/><rect x="714.2" y="363.2" width="1.3" height="2.3" fill="#fff"/><rect x="725.5" y="374.6" width="1.7" height="1.6" fill="#fff"/><rect x="725.2" y="365.1" width="2.0" height="1.4" fill="#fff"/><rect x="715.5" y="338.6" width="2.1" height="1.9" fill="#fff"/><rect x="714.3" y="389.9" width="1.5" height="1.7" fill="#fff"/><rect x="714.5" y="352.1" width="2.2" height="1.6" fill="#fff"/><rect x="714.7" y="365.9" width="1.6" height="2.3" fill="#fff"/><rect x="713.8" y="396.7" width="1.3" height="2.3" fill="#fff"/><rect x="722.7" y="348.3" width="1.8" height="1.5" fill="#fff"/><rect x="716.1" y="347.7" width="1.6" height="2.4" fill="#fff"/><rect x="713.6" y="353.2" width="2.3" height="1.3" fill="#fff"/><rect x="723.6" y="353.5" width="2.4" height="1.2" fill="#fff"/><rect x="724.9" y="356.5" width="1.4" height="1.2" fill="#fff"/><rect x="725.3" y="368.2" width="1.4" height="1.7" fill="#fff"/><rect x="721.1" y="343.7" width="1.4" height="2.1" fill="#fff"/><rect x="723.4" y="347.4" width="1.3" height="1.3" fill="#fff"/><rect x="721.7" y="366.2" width="1.5" height="1.4" fill="#fff"/><rect x="721.8" y="379.6" width="2.2" height="1.9" fill="#fff"/><rect x="715.2" y="339.1" width="2.1" height="1.7" fill="#fff"/><rect x="723.5" y="338.5" width="2.2" height="1.6" fill="#fff"/><rect x="719.9" y="336.0" width="2.3" height="1.8" fill="#fff"/><rect x="726.0" y="351.8" width="1.4" height="2.2" fill="#fff"/><rect x="717.9" y="345.3" width="1.6" height="1.9" fill="#fff"/><rect x="719.1" y="367.5" width="1.3" height="2.1" fill="#fff"/><rect x="717.1" y="379.8" width="1.7" height="2.1" fill="#fff"/><rect x="713.0" y="390.0" width="2.3" height="1.8" fill="#fff"/><rect x="720.2" y="368.4" width="1.8" height="1.2" fill="#fff"/><rect x="714.9" y="341.5" width="1.5" height="2.2" fill="#fff"/><rect x="723.2" y="347.3" width="1.2" height="1.9" fill="#fff"/><rect x="721.2" y="367.9" width="2.0" height="1.3" fill="#fff"/><rect x="719.9" y="366.5" width="1.5" height="1.3" fill="#fff"/><rect x="718.5" y="343.6" width="1.9" height="2.2" fill="#fff"/><rect x="714.4" y="371.1" width="2.1" height="1.4" fill="#fff"/><rect x="718.2" y="361.5" width="2.2" height="1.8" fill="#fff"/><rect x="724.4" y="356.3" width="1.5" height="1.6" fill="#fff"/><rect x="712.9" y="367.6" width="2.3" height="2.3" fill="#fff"/><rect x="716.0" y="361.6" width="2.0" height="1.6" fill="#fff"/><rect x="720.5" y="339.4" width="1.7" height="1.8" fill="#fff"/><rect x="722.3" y="351.7" width="2.0" height="1.5" fill="#fff"/><rect x="721.9" y="350.8" width="1.8" height="1.7" fill="#fff"/><rect x="716.9" y="375.8" width="1.3" height="1.9" fill="#fff"/><rect x="727.3" y="367.4" width="1.5" height="1.8" fill="#fff"/><rect x="720.5" y="344.3" width="1.3" height="1.4" fill="#fff"/><rect x="716.7" y="360.6" width="1.5" height="1.5" fill="#fff"/><rect x="713.4" y="369.4" width="2.2" height="1.9" fill="#fff"/><rect x="721.1" y="376.0" width="1.4" height="2.1" fill="#fff"/><rect x="719.4" y="369.5" width="1.9" height="1.8" fill="#fff"/><rect x="717.0" y="350.3" width="1.5" height="1.8" fill="#fff"/><rect x="718.1" y="371.9" width="1.2" height="1.6" fill="#fff"/><rect x="725.8" y="350.0" width="1.9" height="1.8" fill="#fff"/><rect x="716.7" y="383.6" width="1.4" height="1.3" fill="#fff"/><rect x="725.9" y="362.7" width="1.3" height="1.7" fill="#fff"/><rect x="719.0" y="381.3" width="1.3" height="1.5" fill="#fff"/><rect x="714.5" y="356.2" width="1.6" height="2.0" fill="#fff"/><rect x="721.9" y="388.5" width="2.2" height="1.8" fill="#fff"/><rect x="723.8" y="381.8" width="2.1" height="1.8" fill="#fff"/><rect x="724.6" y="379.6" width="2.3" height="1.4" fill="#fff"/><rect x="724.3" y="371.9" width="1.8" height="2.4" fill="#fff"/><rect x="721.2" y="361.3" width="2.1" height="2.2" fill="#fff"/><rect x="721.7" y="358.9" width="1.7" height="1.7" fill="#fff"/><rect x="723.6" y="353.5" width="1.7" height="1.9" fill="#fff"/><rect x="718.2" y="355.3" width="2.1" height="2.2" fill="#fff"/><rect x="720.0" y="363.0" width="1.4" height="1.6" fill="#fff"/><rect x="714.3" y="371.3" width="1.9" height="1.3" fill="#fff"/><rect x="726.7" y="355.4" width="2.2" height="2.2" fill="#fff"/><rect x="718.8" y="392.4" width="1.2" height="1.3" fill="#fff"/><rect x="721.0" y="366.3" width="2.3" height="2.1" fill="#fff"/><rect x="720.3" y="367.6" width="2.0" height="1.7" fill="#fff"/><rect x="717.7" y="372.5" width="1.6" height="2.3" fill="#fff"/><rect x="722.8" y="368.1" width="1.3" height="1.6" fill="#fff"/><rect x="718.4" y="370.4" width="1.9" height="2.3" fill="#fff"/><rect x="727.4" y="365.7" width="1.7" height="1.9" fill="#fff"/><rect x="720.5" y="386.4" width="1.4" height="1.6" fill="#fff"/><rect x="720.2" y="342.0" width="2.3" height="2.0" fill="#fff"/>
<rect x="711.5" y="358.9" width="1.2" height="1.3" fill="#fff"/><rect x="706.7" y="362.7" width="1.2" height="1.2" fill="#fff"/><rect x="708.2" y="367.1" width="1.4" height="2.0" fill="#fff"/><rect x="708.3" y="341.9" width="1.4" height="1.8" fill="#fff"/><rect x="704.0" y="371.1" width="1.0" height="1.3" fill="#fff"/><rect x="710.9" y="366.4" width="1.7" height="1.2" fill="#fff"/><rect x="706.5" y="364.9" width="1.3" height="1.6" fill="#fff"/><rect x="707.5" y="358.5" width="1.1" height="1.2" fill="#fff"/><rect x="709.9" y="344.8" width="1.1" height="1.2" fill="#fff"/><rect x="706.8" y="377.0" width="1.6" height="1.8" fill="#fff"/><rect x="710.0" y="354.5" width="1.7" height="1.4" fill="#fff"/><rect x="702.2" y="352.0" width="1.1" height="1.9" fill="#fff"/><rect x="707.6" y="355.7" width="1.4" height="1.4" fill="#fff"/><rect x="700.7" y="380.1" width="1.6" height="2.0" fill="#fff"/><rect x="705.7" y="367.9" width="1.2" height="1.0" fill="#fff"/><rect x="712.1" y="378.5" width="1.3" height="1.9" fill="#fff"/><rect x="710.6" y="353.7" width="1.6" height="2.0" fill="#fff"/><rect x="703.2" y="357.5" width="1.7" height="1.2" fill="#fff"/>
<path d="M613,335 C613.2,338.3 613.5,348.3 614,355 C614.5,361.7 615.2,368.8 616,375 C616.8,381.2 618.5,389.2 619,392" fill="none" stroke="#ffffff" stroke-width="3.2" stroke-linejoin="round" stroke-linecap="round"/>
<path d="M725,340 C725.2,343.3 725.7,354.7 726,360 C726.3,365.3 727.7,367.3 727,372 C726.3,376.7 722.8,385.3 722,388" fill="none" stroke="#ffffff" stroke-width="3" stroke-linejoin="round" stroke-linecap="round"/>
<path d="M619,345 C619.3,347.5 620.3,355.5 621,360 C621.7,364.5 622.7,370.0 623,372" fill="none" stroke="#ffffff" stroke-width="1.6" stroke-linejoin="round" stroke-linecap="round"/>
<path d="M718,348 C718.2,350.3 719.2,357.0 719,362 C718.8,367.0 717.3,375.3 717,378" fill="none" stroke="#ffffff" stroke-width="1.6" stroke-linejoin="round" stroke-linecap="round"/>
<rect x="634.7" y="395.8" width="1.5" height="1.8" fill="#fff"/><rect x="632.8" y="383.1" width="1.4" height="1.2" fill="#fff"/><rect x="653.2" y="385.2" width="1.6" height="1.1" fill="#fff"/><rect x="640.9" y="386.9" width="1.4" height="1.1" fill="#fff"/><rect x="629.5" y="394.9" width="1.4" height="1.2" fill="#fff"/><rect x="631.4" y="385.1" width="1.2" height="1.0" fill="#fff"/><rect x="644.6" y="386.1" width="1.2" height="1.7" fill="#fff"/><rect x="628.6" y="384.9" width="1.8" height="1.1" fill="#fff"/><rect x="638.4" y="395.1" width="1.8" height="1.2" fill="#fff"/><rect x="635.9" y="393.0" width="1.4" height="2.0" fill="#fff"/><rect x="631.8" y="397.1" width="1.5" height="1.2" fill="#fff"/><rect x="638.7" y="382.4" width="1.7" height="1.3" fill="#fff"/><rect x="651.2" y="390.6" width="1.4" height="1.2" fill="#fff"/><rect x="643.0" y="383.8" width="1.9" height="1.1" fill="#fff"/><rect x="640.4" y="389.8" width="1.3" height="1.8" fill="#fff"/><rect x="636.8" y="391.8" width="1.6" height="1.3" fill="#fff"/><rect x="636.9" y="381.5" width="1.2" height="1.9" fill="#fff"/><rect x="635.0" y="391.9" width="1.1" height="1.6" fill="#fff"/><rect x="636.1" y="389.0" width="1.3" height="1.1" fill="#fff"/><rect x="634.7" y="384.1" width="1.1" height="1.7" fill="#fff"/><rect x="633.9" y="387.3" width="1.9" height="1.8" fill="#fff"/><rect x="650.7" y="395.5" width="1.1" height="1.3" fill="#fff"/><rect x="626.8" y="392.2" width="1.7" height="1.4" fill="#fff"/><rect x="637.6" y="391.9" width="1.7" height="1.2" fill="#fff"/><rect x="649.7" y="386.3" width="1.6" height="1.2" fill="#fff"/><rect x="629.2" y="396.4" width="1.7" height="1.7" fill="#fff"/><rect x="627.1" y="380.7" width="1.2" height="1.2" fill="#fff"/><rect x="634.5" y="386.9" width="1.0" height="1.3" fill="#fff"/><rect x="643.9" y="383.2" width="1.8" height="1.6" fill="#fff"/><rect x="646.1" y="384.6" width="1.4" height="1.7" fill="#fff"/>
<rect x="692.4" y="380.0" width="1.8" height="1.8" fill="#fff"/><rect x="690.9" y="380.8" width="1.9" height="1.6" fill="#fff"/><rect x="685.1" y="384.4" width="1.1" height="1.8" fill="#fff"/><rect x="689.0" y="396.5" width="1.7" height="1.1" fill="#fff"/><rect x="700.7" y="387.1" width="1.7" height="1.8" fill="#fff"/><rect x="690.7" y="381.6" width="1.9" height="1.4" fill="#fff"/><rect x="706.3" y="392.4" width="1.7" height="1.8" fill="#fff"/><rect x="699.1" y="388.2" width="1.1" height="1.7" fill="#fff"/><rect x="694.3" y="389.2" width="1.9" height="1.1" fill="#fff"/><rect x="702.3" y="380.8" width="1.7" height="1.8" fill="#fff"/><rect x="690.3" y="389.8" width="2.0" height="1.6" fill="#fff"/><rect x="697.1" y="384.5" width="1.1" height="1.4" fill="#fff"/><rect x="693.9" y="383.6" width="1.3" height="1.1" fill="#fff"/><rect x="701.0" y="392.1" width="1.2" height="1.2" fill="#fff"/><rect x="696.4" y="388.0" width="1.9" height="1.4" fill="#fff"/><rect x="691.2" y="395.9" width="1.1" height="1.6" fill="#fff"/><rect x="692.0" y="394.7" width="1.5" height="1.8" fill="#fff"/><rect x="688.1" y="392.0" width="1.6" height="1.5" fill="#fff"/><rect x="702.4" y="395.0" width="1.1" height="1.3" fill="#fff"/><rect x="692.7" y="383.7" width="1.1" height="1.3" fill="#fff"/><rect x="688.7" y="392.6" width="1.4" height="1.1" fill="#fff"/><rect x="691.8" y="388.4" width="1.4" height="1.2" fill="#fff"/><rect x="685.7" y="380.2" width="2.0" height="1.8" fill="#fff"/><rect x="686.0" y="392.9" width="2.0" height="1.6" fill="#fff"/><rect x="686.6" y="388.8" width="1.4" height="1.2" fill="#fff"/><rect x="697.0" y="380.1" width="1.9" height="1.6" fill="#fff"/><rect x="699.1" y="396.8" width="1.7" height="1.3" fill="#fff"/><rect x="689.9" y="382.5" width="1.0" height="1.8" fill="#fff"/><rect x="704.1" y="385.3" width="1.2" height="1.6" fill="#fff"/><rect x="704.3" y="396.7" width="1.2" height="1.8" fill="#fff"/>
<path d="M628,396 L634,386 L640,392 L646,384 L652,392" fill="none" stroke="#ffffff" stroke-width="1.8" stroke-linejoin="round" stroke-linecap="round"/>
<path d="M686,386 L692,395 L698,385 L704,393 L708,386" fill="none" stroke="#ffffff" stroke-width="1.8" stroke-linejoin="round" stroke-linecap="round"/>
<circle cx="660" cy="350" r="0.8" fill="#ffffff"/><circle cx="675" cy="352" r="0.8" fill="#ffffff"/><circle cx="632" cy="315" r="0.8" fill="#ffffff"/><circle cx="705" cy="318" r="0.8" fill="#ffffff"/><circle cx="700" cy="285" r="0.8" fill="#ffffff"/><circle cx="636" cy="276" r="0.8" fill="#ffffff"/><circle cx="690" cy="383" r="0.8" fill="#ffffff"/><circle cx="646" cy="395" r="0.8" fill="#ffffff"/><circle cx="695" cy="398" r="0.8" fill="#ffffff"/><circle cx="655" cy="392" r="0.8" fill="#ffffff"/><circle cx="668" cy="405" r="0.8" fill="#ffffff"/>
</g>
</svg>

</body></html>
